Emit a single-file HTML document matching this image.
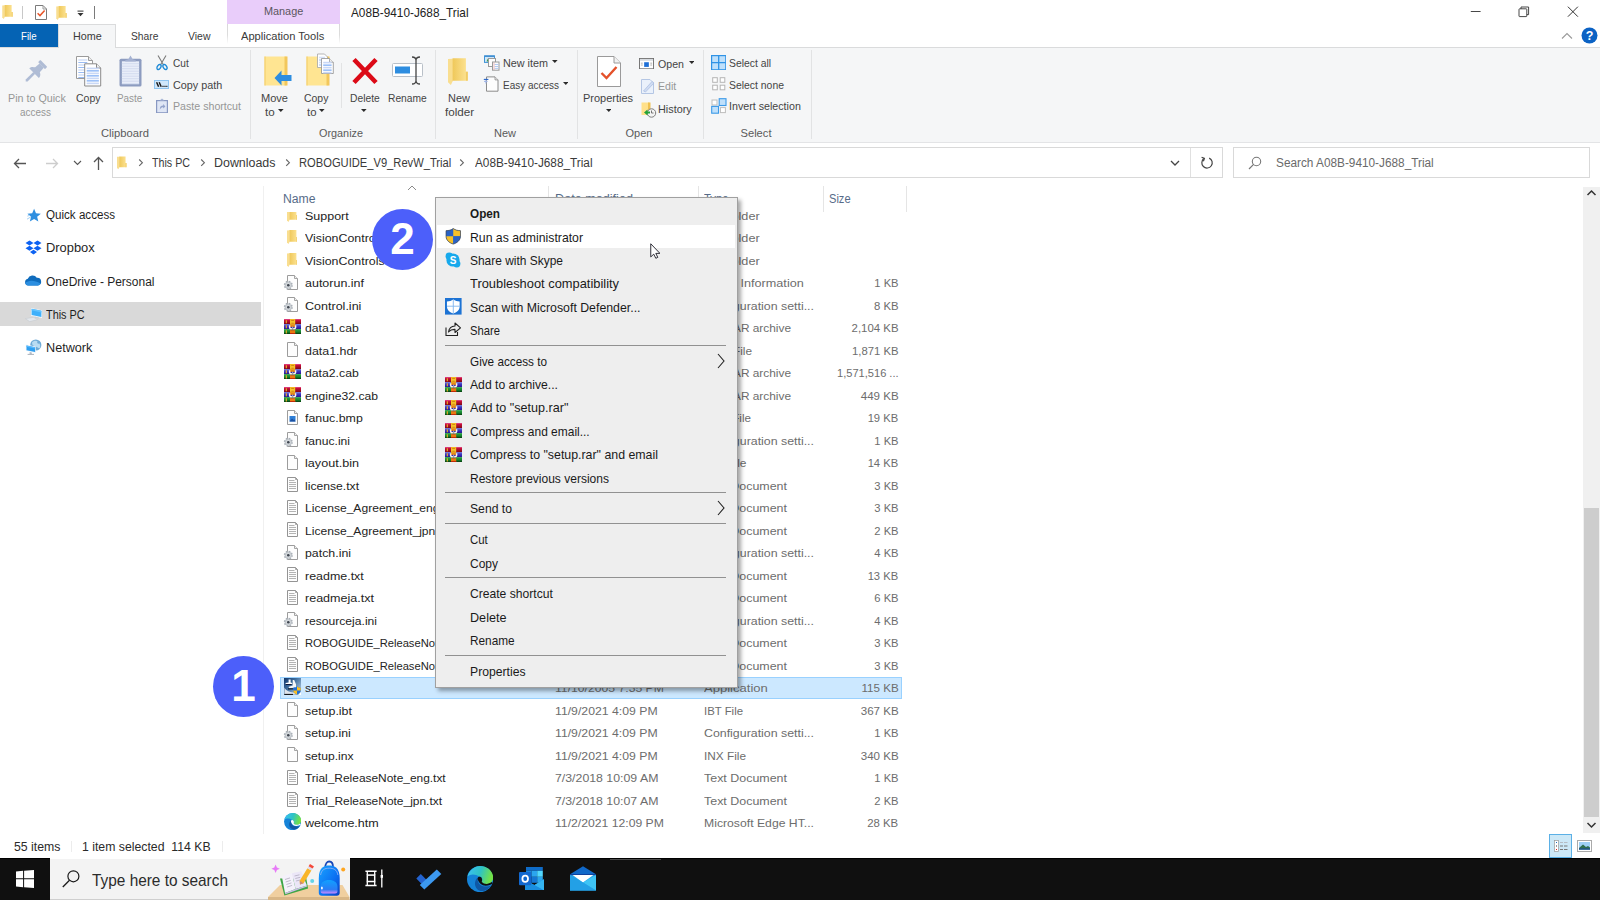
<!DOCTYPE html>
<html lang="en"><head><meta charset="utf-8"><title>A08B-9410-J688_Trial</title>
<style>
html,body{margin:0;padding:0;}
body{width:1600px;height:900px;overflow:hidden;background:#fff;position:relative;font-family:"Liberation Sans", sans-serif;font-size:12px;color:#222;}
.sec{position:absolute;left:0;top:0;width:1600px;height:900px;margin:0;padding:0;display:block;}
.a{position:absolute;display:block;}
.t{position:absolute;white-space:pre;line-height:16px;height:16px;}
</style></head>
<body>
<svg width="0" height="0" style="position:absolute" aria-hidden="true"><defs><linearGradient id="fg" x1="0" y1="0" x2="1" y2="0"><stop offset="0" stop-color="#efc85a"/><stop offset="1" stop-color="#fde496"/></linearGradient><linearGradient id="rr" x1="0" y1="0" x2="0" y2="1"><stop offset="0" stop-color="#e8559a"/><stop offset=".25" stop-color="#c8103c"/><stop offset="1" stop-color="#7c0612"/></linearGradient><linearGradient id="rb" x1="0" y1="0" x2="0" y2="1"><stop offset="0" stop-color="#6f74d6"/><stop offset=".5" stop-color="#3532bd"/><stop offset="1" stop-color="#2a148c"/></linearGradient><linearGradient id="rg" x1="0" y1="0" x2="0" y2="1"><stop offset="0" stop-color="#2aa84a"/><stop offset=".6" stop-color="#15802c"/><stop offset="1" stop-color="#06380c"/></linearGradient><linearGradient id="ry" x1="0" y1="0" x2="0" y2="1"><stop offset="0" stop-color="#f2b51c"/><stop offset=".45" stop-color="#f6c62c"/><stop offset="1" stop-color="#d8660e"/></linearGradient><linearGradient id="su" x1="0" y1="0" x2="1" y2="0.8"><stop offset="0" stop-color="#12366a"/><stop offset=".45" stop-color="#3f6f9f"/><stop offset="1" stop-color="#b4cbe0"/></linearGradient><linearGradient id="eg" x1="0" y1="0" x2="1" y2="0.25"><stop offset="0" stop-color="#3cc0f8"/><stop offset=".55" stop-color="#2fc3c4"/><stop offset="1" stop-color="#72e248"/></linearGradient><linearGradient id="bp" x1="0" y1="0" x2="1" y2="1"><stop offset="0" stop-color="#19a4ff"/><stop offset=".6" stop-color="#0b6ff2"/><stop offset="1" stop-color="#0a3fc4"/></linearGradient><linearGradient id="pk" x1="0" y1="0" x2="0" y2="1"><stop offset="0" stop-color="#11a0ff"/><stop offset=".7" stop-color="#2a7cf5"/><stop offset="1" stop-color="#d08bff"/></linearGradient></defs></svg>
<header class="sec" aria-label="Explorer window chrome">
<svg class="a" style="left:2px;top:5px" width="11" height="14" viewBox="0 0 10.5 14" ><path d="M0 0.4 L2.6 0.2 L2.6 11.8 L1.5 14 L0 12.6 Z" fill="#f9de90"/><path d="M2.4 0 H9.4 V7 H10.4 V11.7 H2.4 Z" fill="url(#fg)"/><path d="M9.4 7 H10.4 V11.7 H9.4 Z" fill="#f1cb66"/></svg>
<div class="a" style="left:22px;top:6px;width:1px;height:13px;background:#c8c8c8"></div>
<svg class="a" style="left:34px;top:5px" width="14" height="15" viewBox="0 0 14 15" ><path d="M1.5 0.5 H9 L12.5 4 V14.5 H1.5 Z" fill="#fff" stroke="#7a7a7a"/><path d="M9 0.5V4H12.5" fill="none" stroke="#9a9a9a"/><path d="M3.6 8.2 L6 10.6 L10.6 5.4" fill="none" stroke="#e8562a" stroke-width="1.5"/></svg>
<svg class="a" style="left:56px;top:6px" width="11" height="14" viewBox="0 0 10.5 14" ><path d="M0 0.4 L2.6 0.2 L2.6 11.8 L1.5 14 L0 12.6 Z" fill="#f9de90"/><path d="M2.4 0 H9.4 V7 H10.4 V11.7 H2.4 Z" fill="url(#fg)"/><path d="M9.4 7 H10.4 V11.7 H9.4 Z" fill="#f1cb66"/></svg>
<svg class="a" style="left:77px;top:10px" width="7" height="7" viewBox="0 0 7 7" ><rect x="0.5" y="0.6" width="6" height="1" fill="#333"/><path d="M0.5 3 H6.5 L3.5 6.2Z" fill="#333"/></svg>
<div class="a" style="left:94px;top:6px;width:1px;height:13px;background:#7a7a7a"></div>
<div class="a" style="left:227px;top:0px;width:113px;height:24px;background:#e9cdfa"></div>
<span class="t" style="top:3.15px;font-size:11.2px;color:#5a5560;left:263.75px;transform:scaleX(0.9706);transform-origin:left center;">Manage</span>
<span class="t" style="top:5.00px;font-size:13px;color:#222;left:351.25px;transform:scaleX(0.9067);transform-origin:left center;">A08B-9410-J688_Trial</span>
<svg class="a" style="left:1470px;top:6px" width="12" height="12" viewBox="0 0 12 12" ><path d="M0.8 5.5H10.6" stroke="#333" stroke-width="0.9"/></svg>
<svg class="a" style="left:1518px;top:6px" width="12" height="12" viewBox="0 0 12 12" ><rect x="1" y="2.8" width="7.8" height="7.8" rx=".6" fill="#fff" stroke="#333" stroke-width=".9"/><path d="M3 2.8V1H10.6V8.6H8.8" fill="none" stroke="#333" stroke-width=".9"/></svg>
<svg class="a" style="left:1567px;top:6px" width="12" height="12" viewBox="0 0 12 12" ><path d="M0.9 0.7L10.9 10.7M10.9 0.7L0.9 10.7" stroke="#2a2a2a" stroke-width="0.95"/></svg>
<div class="a" style="left:0px;top:24px;width:58px;height:23px;background:#0563b4"></div>
<span class="t" style="top:27.90px;font-size:11.2px;color:#fff;left:20.90px;transform:scaleX(0.8652);transform-origin:left center;">File</span>
<div class="a" style="left:0px;top:47px;width:1600px;height:96px;background:#f5f6f7;border-top:1px solid #dadbdc;border-bottom:1px solid #e3e4e6;box-sizing:border-box"></div>
<div class="a" style="left:58px;top:24px;width:58px;height:24px;background:#f5f6f7;border:1px solid #dadbdc;border-bottom:none;box-sizing:border-box"></div>
<span class="t" style="top:27.90px;font-size:11.2px;color:#3a3a3a;left:72.50px;transform:scaleX(0.9634);transform-origin:left center;">Home</span>
<span class="t" style="top:27.90px;font-size:11.2px;color:#3a3a3a;left:130.60px;transform:scaleX(0.9176);transform-origin:left center;">Share</span>
<span class="t" style="top:27.90px;font-size:11.2px;color:#3a3a3a;left:187.50px;transform:scaleX(0.9357);transform-origin:left center;">View</span>
<div class="a" style="left:227px;top:24px;width:1px;height:20px;background:linear-gradient(#d9d9d9,#dcdcdc 55%,#fff)"></div>
<div class="a" style="left:339px;top:24px;width:1px;height:20px;background:linear-gradient(#d9d9d9,#dcdcdc 55%,#fff)"></div>
<span class="t" style="top:27.90px;font-size:11.2px;color:#3a3a3a;left:240.75px;transform:scaleX(0.9938);transform-origin:left center;">Application Tools</span>
<svg class="a" style="left:1561px;top:32px" width="12" height="8" viewBox="0 0 12 8" ><path d="M1 6.5L6 1.5L11 6.5" fill="none" stroke="#9a9a9a" stroke-width="1.1"/></svg>
<svg class="a" style="left:1580.5px;top:27.3px" width="17" height="17" viewBox="0 0 17 17" ><circle cx="8.5" cy="8.5" r="8" fill="#0b62c4"/><text x="8.5" y="13" text-anchor="middle" font-family="Liberation Sans, sans-serif" font-weight="700" font-size="12.5" fill="#fff">?</text></svg>
<svg class="a" style="left:13px;top:157px" width="14" height="13" viewBox="0 0 14 13" ><path d="M13 6.5H1.5M6 2L1.5 6.5L6 11" fill="none" stroke="#555" stroke-width="1.3"/></svg>
<svg class="a" style="left:45px;top:157px" width="14" height="13" viewBox="0 0 14 13" ><path d="M1 6.5H12.5M8 2L12.5 6.5L8 11" fill="none" stroke="#cdcdcd" stroke-width="1.3"/></svg>
<svg class="a" style="left:73px;top:160px" width="9" height="6" viewBox="0 0 9 6" ><path d="M1 1L4.5 4.5L8 1" fill="none" stroke="#555" stroke-width="1.1"/></svg>
<svg class="a" style="left:92px;top:156px" width="13" height="15" viewBox="0 0 13 15" ><path d="M6.5 14V1.5M2 6L6.5 1.5L11 6" fill="none" stroke="#555" stroke-width="1.3"/></svg>
<div class="a" style="left:112px;top:147px;width:1111px;height:31px;border:1px solid #d9d9d9;box-sizing:border-box;background:#fff"></div>
<svg class="a" style="left:117px;top:155.8px" width="9.6" height="13.8" viewBox="0 0 10.5 14" ><path d="M0 0.4 L2.6 0.2 L2.6 11.8 L1.5 14 L0 12.6 Z" fill="#f9de90"/><path d="M2.4 0 H9.4 V7 H10.4 V11.7 H2.4 Z" fill="url(#fg)"/><path d="M9.4 7 H10.4 V11.7 H9.4 Z" fill="#f1cb66"/></svg>
<svg class="a" style="left:138px;top:158px" width="6" height="9" viewBox="0 0 6 9" ><path d="M1.2 1.5L4.4 4.7L1.2 7.9" fill="none" stroke="#666" stroke-width="1.1"/></svg>
<svg class="a" style="left:200px;top:158px" width="6" height="9" viewBox="0 0 6 9" ><path d="M1.2 1.5L4.4 4.7L1.2 7.9" fill="none" stroke="#666" stroke-width="1.1"/></svg>
<svg class="a" style="left:285px;top:158px" width="6" height="9" viewBox="0 0 6 9" ><path d="M1.2 1.5L4.4 4.7L1.2 7.9" fill="none" stroke="#666" stroke-width="1.1"/></svg>
<svg class="a" style="left:459px;top:158px" width="6" height="9" viewBox="0 0 6 9" ><path d="M1.2 1.5L4.4 4.7L1.2 7.9" fill="none" stroke="#666" stroke-width="1.1"/></svg>
<span class="t" style="top:155.10px;font-size:12.3px;color:#3a3a3a;left:152.00px;transform:scaleX(0.8689);transform-origin:left center;">This PC</span>
<span class="t" style="top:155.10px;font-size:12.3px;color:#3a3a3a;left:214.00px;transform:scaleX(1.0108);transform-origin:left center;">Downloads</span>
<span class="t" style="top:155.10px;font-size:12.3px;color:#3a3a3a;left:298.75px;transform:scaleX(0.9081);transform-origin:left center;">ROBOGUIDE_V9_RevW_Trial</span>
<span class="t" style="top:155.10px;font-size:12.3px;color:#3a3a3a;left:474.50px;transform:scaleX(0.9585);transform-origin:left center;">A08B-9410-J688_Trial</span>
<svg class="a" style="left:1170px;top:160px" width="10" height="7" viewBox="0 0 10 7" ><path d="M1 1L5 5L9 1" fill="none" stroke="#444" stroke-width="1.3"/></svg>
<div class="a" style="left:1190px;top:148px;width:1px;height:29px;background:#e0e0e0"></div>
<svg class="a" style="left:1200px;top:156px" width="14" height="14" viewBox="0 0 14 14" ><path d="M9.2 2.1 A5.2 5.2 0 1 1 4 2.6" fill="none" stroke="#444" stroke-width="1.2"/><path d="M1.6 1.2 L4.4 2.4 L3.4 5.2" fill="none" stroke="#444" stroke-width="1.2"/></svg>
<div class="a" style="left:1233px;top:147px;width:357px;height:31px;border:1px solid #d9d9d9;box-sizing:border-box;background:#fff"></div>
<svg class="a" style="left:1248px;top:156px" width="14" height="14" viewBox="0 0 14 14" ><circle cx="8.5" cy="5.5" r="4.2" fill="none" stroke="#777" stroke-width="1.1"/><path d="M5.6 8.4L1 13" stroke="#777" stroke-width="1.2"/></svg>
<span class="t" style="top:155.10px;font-size:12.3px;color:#6a6a6a;left:1276.00px;transform:scaleX(0.9602);transform-origin:left center;">Search A08B-9410-J688_Trial</span>
<div class="a" style="left:0px;top:302px;width:261px;height:24.4px;background:#d9d9d9"></div>
<div class="a" style="left:263px;top:186px;width:1px;height:648px;background:#f0f0f0"></div>
<span class="t" style="top:206.90px;font-size:12px;color:#1f1f1f;left:46.00px;transform:scaleX(0.9669);transform-origin:left center;">Quick access</span>
<span class="t" style="top:240.10px;font-size:12px;color:#1f1f1f;left:46.00px;transform:scaleX(1.0736);transform-origin:left center;">Dropbox</span>
<span class="t" style="top:273.60px;font-size:12px;color:#1f1f1f;left:46.00px;transform:scaleX(0.9980);transform-origin:left center;">OneDrive - Personal</span>
<span class="t" style="top:306.90px;font-size:12px;color:#1f1f1f;left:46.00px;transform:scaleX(0.9042);transform-origin:left center;">This PC</span>
<span class="t" style="top:340.10px;font-size:12px;color:#1f1f1f;left:46.00px;transform:scaleX(1.0542);transform-origin:left center;">Network</span>
<svg class="a" style="left:26.6px;top:207.6px" width="14.2" height="14.2" viewBox="0 0 15 15" ><path d="M7.5 0.8L9.5 5.6L14.6 6L10.7 9.3L12 14.3L7.5 11.6L3 14.3L4.3 9.3L0.4 6L5.5 5.6Z" fill="#2f8fe0"/><path d="M0 11.8L4.3 9.3M0.4 8.6L3 7.6" stroke="#9fcdf3" stroke-width="1"/></svg>
<svg class="a" style="left:25px;top:240px" width="17" height="16" viewBox="0 0 17 16" ><path d="M4.5 0.5L8.5 3L4.5 5.5L0.5 3ZM12.5 0.5L16.5 3L12.5 5.5L8.5 3ZM4.5 5.8L8.5 8.3L4.5 10.8L0.5 8.3ZM12.5 5.8L16.5 8.3L12.5 10.8L8.5 8.3ZM8.5 9.8L12 12L8.5 14.5L5 12Z" fill="#0d62f2"/></svg>
<svg class="a" style="left:24px;top:274px" width="18" height="13" viewBox="0 0 18 13" ><path d="M4 11.5 A3.4 3.4 0 0 1 3.8 4.8 A5 5 0 0 1 12.8 3.8 A3.9 3.9 0 0 1 14 11.5Z" fill="#0f6cbd"/><path d="M1.2 9 C4 6 10 5.5 16.5 9.5 A3 3 0 0 1 14 11.5 H4 A3.4 3.4 0 0 1 1.2 9Z" fill="#2b8ee0"/></svg>
<svg class="a" style="left:25px;top:307px" width="18" height="16" viewBox="0 0 18 16" ><path d="M6 1L17 3.3V10.9L6 8.7Z" fill="#f4f8fc"/><path d="M6.6 1.8L16.4 3.8V10.1L6.6 8.1Z" fill="#3fb0fb"/><path d="M6.6 1.8L16.4 3.8V5.4L6.6 3.2Z" fill="#63c3ff"/><path d="M9.5 9.6L13.5 10.5L14.6 11.8L10 11Z" fill="#c9ced4"/><path d="M0.4 11.6L8.6 10.4L12.6 12.6L4.6 14.6Z" fill="#e3e7ec" stroke="#c3c8cf" stroke-width=".5"/></svg>
<svg class="a" style="left:25px;top:339px" width="18" height="17" viewBox="0 0 18 17" ><circle cx="10.8" cy="6" r="5.6" fill="#6fabd6"/><path d="M7 3.4C8.6 1.6 11 1.4 12.6 2.4C11.6 3.8 12.6 5 14.4 4.6C15.4 6 15.6 8 14.6 9.6C13 9 12 7.6 10.4 7.8C9 8 8.6 6.4 7.4 5.8Z" fill="#b9dcf2"/><path d="M0.8 5.6L10.8 7.6V14L0.8 11.8Z" fill="#eef4fa"/><path d="M1.5 6.5L10.1 8.2V13.1L1.5 11.2Z" fill="#2f9ff0"/><path d="M1.5 6.5L10.1 8.2V9.6L1.5 7.8Z" fill="#58bbff"/><path d="M4.6 13L6.8 13.6V15.3H4.6Z" fill="#b4bcc6"/><path d="M2.6 15.4H9" stroke="#aab2bc" stroke-width="1"/></svg>
<span class="t" style="top:839.35px;font-size:12.4px;color:#2a2a2a;left:14.40px;transform:scaleX(0.9909);transform-origin:left center;">55 items</span>
<span class="t" style="top:839.35px;font-size:12.4px;color:#2a2a2a;left:81.80px;transform:scaleX(0.9896);transform-origin:left center;">1 item selected  114 KB</span>
<div class="a" style="left:71px;top:841px;width:1px;height:11px;background:#ececec"></div>
<div class="a" style="left:222px;top:841px;width:1px;height:11px;background:#ececec"></div>
<div class="a" style="left:1549px;top:834px;width:23px;height:24px;background:#cce8f7;border:1px solid #5bb0e6;box-sizing:border-box"></div>
<svg class="a" style="left:1554px;top:840px" width="14" height="12" viewBox="0 0 14 12" ><rect x="0.5" y="0.5" width="4" height="11" fill="#fff" stroke="#999" stroke-width=".7"/><rect x="2" y="2" width="1" height="1" fill="#1e6fc0"/><rect x="2" y="5.5" width="1" height="1" fill="#334"/><rect x="2" y="9" width="1" height="1" fill="#d22"/><path d="M6 2.5H9M10 2.5H13.5" stroke="#b5bcc4" stroke-width="1.2"/><path d="M6 6H9M10 6H13.5M6 9.5H9M10 9.5H13.5" stroke="#777" stroke-width="1.2"/></svg>
<svg class="a" style="left:1577px;top:840px" width="15" height="12" viewBox="0 0 15 12" ><rect x="0.5" y="0.5" width="14" height="11" fill="#fff" stroke="#aaa"/><rect x="2" y="2" width="11" height="7.6" fill="#9fd0f5"/><path d="M2 8L6 4.5L9 7L11 6L13 7.5V9.6H2Z" fill="#2e6e4e"/><rect x="2" y="8.4" width="11" height="1.2" fill="#1d4f9a"/></svg>
<div class="a" style="left:1583px;top:187px;width:17px;height:646px;background:#f0f0f0"></div>
<div class="a" style="left:1584px;top:508px;width:15px;height:309px;background:#cdcdcd"></div>
<svg class="a" style="left:1586px;top:189px" width="11" height="8" viewBox="0 0 11 8" ><path d="M1.5 6L5.5 2L9.5 6" fill="none" stroke="#333" stroke-width="1.5"/></svg>
<svg class="a" style="left:1586px;top:821px" width="11" height="8" viewBox="0 0 11 8" ><path d="M1.5 2L5.5 6L9.5 2" fill="none" stroke="#333" stroke-width="1.5"/></svg>
</header>
<nav class="sec" aria-label="Ribbon">
<svg class="a" style="left:20px;top:55px" width="32" height="32" viewBox="0 0 32 32" ><g transform="translate(23.8 8.4) rotate(45)" fill="#afbcd5"><rect x="-4.9" y="0" width="9.8" height="3.2" rx="0.6"/><path d="M-3 3H3L3.5 9.5H-3.5Z"/><path d="M-6.8 13.8C-6.8 10.8 -4.6 9.6 -3.4 9H3.4C4.6 9.6 6.8 10.8 6.8 13.8Z"/><path d="M-1.3 13.5H1.3V24.2L0 25.6L-1.3 24.2Z"/></g></svg>
<span class="t" style="top:89.95px;font-size:11.2px;color:#969696;left:7.50px;transform:scaleX(0.9581);transform-origin:left center;">Pin to Quick</span>
<span class="t" style="top:103.65px;font-size:11.2px;color:#969696;left:20.30px;transform:scaleX(0.8886);transform-origin:left center;">access</span>
<svg class="a" style="left:75.5px;top:55.5px" width="26" height="31" viewBox="0 0 26 31" ><path d="M0.5 0.5H12.5L16.5 4.5V22.5H0.5Z" fill="#fff" stroke="#9b9b9b"/><path d="M12.5 0.5V4.5H16.5" fill="#eee" stroke="#9b9b9b"/><rect x="2.3" y="3.2" width="9" height="1.6" fill="#d5e1f8"/><rect x="2.3" y="6.05" width="9" height="0.9" fill="#8fb5f2"/><rect x="2.3" y="8.2" width="9" height="1.6" fill="#d5e1f8"/><rect x="2.3" y="11.05" width="9" height="0.9" fill="#8fb5f2"/><rect x="2.3" y="13.2" width="9" height="1.6" fill="#d5e1f8"/><rect x="2.3" y="16.05" width="9" height="0.9" fill="#8fb5f2"/><rect x="2.3" y="18.2" width="9" height="1.6" fill="#d5e1f8"/><rect x="2.3" y="21.05" width="9" height="0.9" fill="#8fb5f2"/><path d="M8.7 7.8H20.5L24.7 12V30H8.7Z" fill="#fff" stroke="#8a8a8a"/><path d="M20.5 7.8V12H24.7" fill="#eee" stroke="#8a8a8a"/><rect x="10.7" y="11.6" width="12.2" height="1.6" fill="#c9d8f6"/><rect x="10.7" y="14.450000000000001" width="12.2" height="0.9" fill="#4f8ff0"/><rect x="10.7" y="16.599999999999998" width="12.2" height="1.6" fill="#c9d8f6"/><rect x="10.7" y="19.45" width="12.2" height="0.9" fill="#4f8ff0"/><rect x="10.7" y="21.599999999999998" width="12.2" height="1.6" fill="#c9d8f6"/><rect x="10.7" y="24.45" width="12.2" height="0.9" fill="#4f8ff0"/><rect x="10.7" y="26.599999999999998" width="12.2" height="1.6" fill="#c9d8f6"/></svg>
<span class="t" style="top:89.95px;font-size:11.2px;color:#444444;left:75.50px;transform:scaleX(0.9378);transform-origin:left center;">Copy</span>
<svg class="a" style="left:118.5px;top:54.5px" width="23" height="32" viewBox="0 0 23 32" ><rect x="0.5" y="3.7" width="22" height="27.8" rx="1.6" fill="#8d9cc0"/><rect x="2.9" y="6.3" width="17.2" height="22.8" fill="#e9eef9"/><rect x="2.9" y="8.2" width="17.2" height="1" fill="#d3dbef"/><rect x="2.9" y="10.7" width="17.2" height="1" fill="#d3dbef"/><rect x="2.9" y="13.2" width="17.2" height="1" fill="#d3dbef"/><rect x="2.9" y="15.7" width="17.2" height="1" fill="#d3dbef"/><rect x="2.9" y="18.2" width="17.2" height="1" fill="#d3dbef"/><rect x="2.9" y="20.7" width="17.2" height="1" fill="#d3dbef"/><rect x="2.9" y="23.2" width="17.2" height="1" fill="#d3dbef"/><rect x="2.9" y="25.7" width="17.2" height="1" fill="#d3dbef"/><rect x="2.9" y="28.2" width="17.2" height="1" fill="#d3dbef"/><path d="M6.2 6.6V5.2L9.3 4.2L11.5 0.6L13.7 4.2L16.8 5.2V6.6Z" fill="#a5b2d2"/></svg>
<span class="t" style="top:89.95px;font-size:11.2px;color:#969696;left:116.90px;transform:scaleX(0.8843);transform-origin:left center;">Paste</span>
<svg class="a" style="left:156px;top:55px" width="12" height="16" viewBox="0 0 12 16" ><path d="M2 0.5L7.6 10M10 0.5L4.4 10" stroke="#7b7b7b" stroke-width="1.1" fill="none"/><ellipse cx="3" cy="12" rx="1.7" ry="2.7" transform="rotate(32 3 12)" fill="none" stroke="#1e8ad6" stroke-width="1.4"/><ellipse cx="9" cy="12" rx="1.7" ry="2.7" transform="rotate(-32 9 12)" fill="none" stroke="#1e8ad6" stroke-width="1.4"/></svg>
<span class="t" style="top:55.45px;font-size:11.2px;color:#444444;left:172.60px;transform:scaleX(0.9012);transform-origin:left center;">Cut</span>
<svg class="a" style="left:154px;top:80px" width="15" height="9" viewBox="0 0 15 9" ><rect x="0.5" y="0.5" width="14" height="8" fill="#cfe7fb" stroke="#8fc4ef"/><path d="M2.6 2.2L4.6 6.8M5.2 2.2L7.2 6.8" stroke="#1a1a1a" stroke-width="1.5"/><path d="M8.4 6.3H9.6M10.4 6.3H11.6M12.3 6.3H13.4" stroke="#1a1a1a" stroke-width="1.3"/></svg>
<span class="t" style="top:76.95px;font-size:11.2px;color:#444444;left:172.60px;transform:scaleX(0.9667);transform-origin:left center;">Copy path</span>
<svg class="a" style="left:155.6px;top:97.6px" width="12" height="15.4" viewBox="0 0 12 15.4" ><rect x="0.6" y="2.6" width="10.8" height="12.2" fill="#dfe6f5" stroke="#8898c2" stroke-width="1.2"/><path d="M3.6 2.6L6 0.4L8.4 2.6Z" fill="#a9b6d6"/><path d="M3.8 11.6C3.8 8.6 5.2 7.6 7.2 7.6V6L9.4 8.4L7.2 10.6V9.2C5.8 9.2 5 9.8 3.8 11.6Z" fill="#93a3cb"/></svg>
<span class="t" style="top:98.25px;font-size:11.2px;color:#969696;left:172.60px;transform:scaleX(0.9508);transform-origin:left center;">Paste shortcut</span>
<span class="t" style="top:124.65px;font-size:11.2px;color:#5a5a5a;left:-25.00px;width:300px;text-align:center;transform:scaleX(1.0023);transform-origin:center center;">Clipboard</span>
<div class="a" style="left:250px;top:50px;width:1px;height:89px;background:#e2e3e4"></div>
<svg class="a" style="left:263.5px;top:56px" width="28" height="30" viewBox="0 0 28 30" ><path d="M0.5 0.5H22.5V29.5H0.5Z" fill="#ffe592"/><path d="M20.5 0.5H23.5V29.5H20.5Z" fill="#f2c75c"/><path d="M0.5 0.5H1.5V29.5H0.5Z" fill="#f1cc66"/><path d="M10.5 22L17.5 14.5V19H27.5V25H17.5V29.5Z" fill="#2d8de0"/></svg>
<span class="t" style="top:89.95px;font-size:11.2px;color:#444444;left:261.00px;transform:scaleX(0.9869);transform-origin:left center;">Move</span>
<span class="t" style="top:103.65px;font-size:11.2px;color:#444444;left:264.80px;transform:scaleX(1.0381);transform-origin:left center;">to</span>
<svg class="a" style="left:278.2px;top:108.9px" width="5.6" height="3" viewBox="0 0 5.6 3" ><path d="M0 0H5.6L2.8 2.9Z" fill="#2b2b2b"/></svg>
<svg class="a" style="left:306px;top:53px" width="28" height="33" viewBox="0 0 28 33" ><g transform="translate(0 3)"><path d="M0.5 0.5H22.5V29.5H0.5Z" fill="#ffe592"/><path d="M20.5 0.5H23.5V29.5H20.5Z" fill="#f2c75c"/><path d="M0.5 0.5H1.5V29.5H0.5Z" fill="#f1cc66"/></g><path d="M11.5 1H18.5L21.5 4V14.5H11.5Z" fill="#fff" stroke="#a5a5a5" stroke-width=".8"/><rect x="13" y="3.7" width="6" height="1.6" fill="#d5e1f8"/><rect x="13" y="6.55" width="6" height="0.9" fill="#8fb5f2"/><rect x="13" y="8.7" width="6" height="1.6" fill="#d5e1f8"/><rect x="13" y="11.55" width="6" height="0.9" fill="#8fb5f2"/><path d="M15.5 5.5H23.5L27.3 9.3V20.5H15.5Z" fill="#fff" stroke="#8f8f8f" stroke-width=".8"/><path d="M23.5 5.5V9.3H27.3" fill="#eee" stroke="#8f8f8f" stroke-width=".7"/><rect x="17.2" y="8.799999999999999" width="8.4" height="1.6" fill="#c9d8f6"/><rect x="17.2" y="11.65" width="8.4" height="0.9" fill="#4f8ff0"/><rect x="17.2" y="13.799999999999999" width="8.4" height="1.6" fill="#c9d8f6"/><rect x="17.2" y="16.650000000000002" width="8.4" height="0.9" fill="#4f8ff0"/><rect x="17.2" y="18.8" width="8.4" height="1.6" fill="#c9d8f6"/></svg>
<span class="t" style="top:89.95px;font-size:11.2px;color:#444444;left:303.60px;transform:scaleX(0.9340);transform-origin:left center;">Copy</span>
<span class="t" style="top:103.65px;font-size:11.2px;color:#444444;left:306.50px;transform:scaleX(1.0167);transform-origin:left center;">to</span>
<svg class="a" style="left:319.2px;top:108.9px" width="5.6" height="3" viewBox="0 0 5.6 3" ><path d="M0 0H5.6L2.8 2.9Z" fill="#2b2b2b"/></svg>
<div class="a" style="left:341px;top:63px;width:1px;height:45px;background:#e2e3e4"></div>
<svg class="a" style="left:351px;top:57px" width="28" height="28" viewBox="0 0 28 28" ><path d="M3 2.5L25 25.5M25 2.5L3 25.5" stroke="#dc0a17" stroke-width="4.6" fill="none"/></svg>
<span class="t" style="top:89.95px;font-size:11.2px;color:#444444;left:349.70px;transform:scaleX(0.9183);transform-origin:left center;">Delete</span>
<svg class="a" style="left:361.4px;top:108.9px" width="5.6" height="3" viewBox="0 0 5.6 3" ><path d="M0 0H5.6L2.8 2.9Z" fill="#2b2b2b"/></svg>
<svg class="a" style="left:392px;top:56px" width="32" height="29" viewBox="0 0 32 29" ><rect x="0.5" y="7.5" width="30" height="13" rx="1" fill="#fff" stroke="#b9c0c8"/><rect x="3" y="10.5" width="15" height="7" fill="#2d8de0"/><path d="M20 1C23 1 24 2.5 24 4.5V24.5C24 26.5 23 28 20 28M28 1C25 1 24 2.5 24 4.5M24 24.5C24 26.5 25 28 28 28" fill="none" stroke="#444" stroke-width="1.3"/></svg>
<span class="t" style="top:89.95px;font-size:11.2px;color:#444444;left:387.50px;transform:scaleX(0.9161);transform-origin:left center;">Rename</span>
<span class="t" style="top:124.65px;font-size:11.2px;color:#5a5a5a;left:191.00px;width:300px;text-align:center;transform:scaleX(0.9690);transform-origin:center center;">Organize</span>
<div class="a" style="left:435px;top:50px;width:1px;height:89px;background:#e2e3e4"></div>
<svg class="a" style="left:448.4px;top:57px" width="20" height="29.4" viewBox="0 0 10.5 14" ><path d="M0 0.4 L2.6 0.2 L2.6 11.8 L1.5 14 L0 12.6 Z" fill="#f9de90"/><path d="M2.4 0 H9.4 V7 H10.4 V11.7 H2.4 Z" fill="url(#fg)"/><path d="M9.4 7 H10.4 V11.7 H9.4 Z" fill="#f1cb66"/></svg>
<span class="t" style="top:89.95px;font-size:11.2px;color:#444444;left:448.40px;transform:scaleX(0.9781);transform-origin:left center;">New</span>
<span class="t" style="top:103.65px;font-size:11.2px;color:#444444;left:445.00px;transform:scaleX(1.0429);transform-origin:left center;">folder</span>
<svg class="a" style="left:484px;top:54.6px" width="16" height="16" viewBox="0 0 16 16" ><rect x="0.5" y="0.8" width="10" height="6.6" fill="#cfe6f8" stroke="#3f93d6"/><path d="M1 1.3H10" stroke="#2b7fc8" stroke-width="1"/><path d="M2.6 6.5L3.6 3.4L4.6 6.5Z" fill="#3a9a4a"/><rect x="4.5" y="3.5" width="7" height="8" fill="#fdfdfd" stroke="#9a9a9a"/><rect x="8.5" y="7" width="6.5" height="8.2" fill="#fdfdfd" stroke="#9a9a9a"/><path d="M10.6 9.5H14.4M10.6 11.5H14.4M10.6 13.4H14.4" stroke="#a9c4f2" stroke-width=".9"/><path d="M10 7.4V15" stroke="#e9a0a0" stroke-width=".7"/></svg>
<span class="t" style="top:55.05px;font-size:11.2px;color:#444444;left:503.00px;transform:scaleX(0.9651);transform-origin:left center;">New item</span>
<svg class="a" style="left:552.2px;top:59.9px" width="5.6" height="3" viewBox="0 0 5.6 3" ><path d="M0 0H5.6L2.8 2.9Z" fill="#2b2b2b"/></svg>
<svg class="a" style="left:483px;top:76.4px" width="16" height="16" viewBox="0 0 16 16" ><path d="M3.5 0.9H12L15 3.9V15.2H3.5Z" fill="#fdfdfd" stroke="#8c8c8c"/><path d="M12 0.9V3.9H15" fill="#eee" stroke="#8c8c8c" stroke-width=".8"/><path d="M0.8 3.4H5.4" stroke="#2464c8" stroke-width="1.1"/><path d="M1 5.4H4.6M2.9 4V7.6" stroke="#9fb4e6" stroke-width="1"/></svg>
<span class="t" style="top:76.75px;font-size:11.2px;color:#444444;left:503.00px;transform:scaleX(0.8915);transform-origin:left center;">Easy access</span>
<svg class="a" style="left:562.8000000000001px;top:81.9px" width="5.6" height="3" viewBox="0 0 5.6 3" ><path d="M0 0H5.6L2.8 2.9Z" fill="#2b2b2b"/></svg>
<span class="t" style="top:124.65px;font-size:11.2px;color:#5a5a5a;left:355.00px;width:300px;text-align:center;transform:scaleX(0.9826);transform-origin:center center;">New</span>
<div class="a" style="left:577px;top:50px;width:1px;height:89px;background:#e2e3e4"></div>
<svg class="a" style="left:596.5px;top:55.5px" width="24" height="31" viewBox="0 0 24 31" ><path d="M0.5 0.5H17L23.5 7V30.5H0.5Z" fill="#fff" stroke="#9a9a9a"/><path d="M17 0.5V7H23.5" fill="#f1f1f1" stroke="#9a9a9a"/><path d="M4.5 17L9.5 22L19.5 11" fill="none" stroke="#e4512a" stroke-width="2.4"/></svg>
<span class="t" style="top:89.95px;font-size:11.2px;color:#444444;left:583.30px;transform:scaleX(0.9804);transform-origin:left center;">Properties</span>
<svg class="a" style="left:605.5px;top:108.9px" width="5.6" height="3" viewBox="0 0 5.6 3" ><path d="M0 0H5.6L2.8 2.9Z" fill="#2b2b2b"/></svg>
<svg class="a" style="left:639px;top:57.6px" width="15" height="11.25" viewBox="0 0 16 12" ><rect x="0.5" y="0.5" width="15" height="11" fill="#fff" stroke="#6f6f6f"/><rect x="1" y="1" width="14" height="2" fill="#d7dbe0"/><rect x="5.5" y="4.5" width="5" height="5" fill="#1f6fd6"/><path d="M2 5.5H4M2 7.5H4M12 5.5H14M12 7.5H14" stroke="#999" stroke-width=".8"/></svg>
<span class="t" style="top:55.85px;font-size:11.2px;color:#444444;left:657.80px;transform:scaleX(0.9479);transform-origin:left center;">Open</span>
<svg class="a" style="left:688.7px;top:60.9px" width="5.6" height="3" viewBox="0 0 5.6 3" ><path d="M0 0H5.6L2.8 2.9Z" fill="#2b2b2b"/></svg>
<svg class="a" style="left:641px;top:78px" width="14" height="16" viewBox="0 0 14 16" ><path d="M0.5 1.5H9L12.5 5V15.5H0.5Z" fill="#eaf1fb" stroke="#b4c6e4"/><path d="M2.5 13L11 3.5L13 5L4.5 14Z" fill="#cfdcf3" stroke="#a9bce0" stroke-width=".7"/></svg>
<span class="t" style="top:78.25px;font-size:11.2px;color:#969696;left:657.80px;transform:scaleX(0.9439);transform-origin:left center;">Edit</span>
<svg class="a" style="left:640.5px;top:102px" width="16" height="16" viewBox="0 0 16 16" ><path d="M0.5 0.5H8.5V13H0.5Z" fill="#ffe08a"/><path d="M7 0.5H9.5V13H7Z" fill="#efc050"/><circle cx="10.5" cy="11" r="4.2" fill="#f4f4f4" stroke="#7d7d7d"/><path d="M10.5 8.5V11H12.5" fill="none" stroke="#666" stroke-width=".9"/><path d="M3 10.5L6.5 7.5V9.5H9V11.5H6.5V13.5Z" fill="#23a33a"/></svg>
<span class="t" style="top:100.85px;font-size:11.2px;color:#444444;left:657.80px;transform:scaleX(0.9680);transform-origin:left center;">History</span>
<span class="t" style="top:124.65px;font-size:11.2px;color:#5a5a5a;left:489.00px;width:300px;text-align:center;transform:scaleX(0.9863);transform-origin:center center;">Open</span>
<div class="a" style="left:703px;top:50px;width:1px;height:89px;background:#e2e3e4"></div>
<svg class="a" style="left:711px;top:55px" width="15.4" height="15.4" viewBox="0 0 15.4 15.4" ><rect x="0.6" y="0.6" width="14.2" height="14.2" fill="#bfe0fb" stroke="#2f93e6" stroke-width="1.2"/><path d="M7.7 0.6V14.8M0.6 7.7H14.8" stroke="#2f93e6" stroke-width="1.3"/></svg>
<span class="t" style="top:55.05px;font-size:11.2px;color:#444444;left:729.40px;transform:scaleX(0.9272);transform-origin:left center;">Select all</span>
<svg class="a" style="left:711.5px;top:77px" width="15" height="15" viewBox="0 0 15 15" ><rect x="0.7" y="0.7" width="4.6" height="4.6" fill="#fff" stroke="#b5b5b5" stroke-width="1"/><rect x="0.7" y="8.2" width="4.6" height="4.6" fill="#fff" stroke="#b5b5b5" stroke-width="1"/><rect x="8.2" y="0.7" width="4.6" height="4.6" fill="#fff" stroke="#b5b5b5" stroke-width="1"/><rect x="8.2" y="8.2" width="4.6" height="4.6" fill="#fff" stroke="#b5b5b5" stroke-width="1"/></svg>
<span class="t" style="top:76.95px;font-size:11.2px;color:#444444;left:729.40px;transform:scaleX(0.9307);transform-origin:left center;">Select none</span>
<svg class="a" style="left:711px;top:98px" width="16" height="16" viewBox="0 0 16 16" ><rect x="1" y="2" width="5" height="5" fill="#fff" stroke="#bdbdbd"/><rect x="8.2" y="0.7" width="6.8" height="6.8" fill="#bfe0fb" stroke="#3c9ae8" stroke-width="1.1"/><rect x="0.7" y="8.4" width="6.8" height="6.8" fill="#bfe0fb" stroke="#3c9ae8" stroke-width="1.1"/><rect x="9.4" y="9.6" width="5" height="5" fill="#fff" stroke="#bdbdbd"/></svg>
<span class="t" style="top:98.25px;font-size:11.2px;color:#444444;left:729.40px;transform:scaleX(0.9548);transform-origin:left center;">Invert selection</span>
<span class="t" style="top:124.65px;font-size:11.2px;color:#5a5a5a;left:605.70px;width:300px;text-align:center;transform:scaleX(0.9970);transform-origin:center center;">Select</span>
<div class="a" style="left:811px;top:50px;width:1px;height:89px;background:#e2e3e4"></div>
</nav>
<main class="sec" aria-label="File list">
<div class="a" style="left:280px;top:676.5px;width:622px;height:22.5px;background:#cce8ff;border:1px solid #99d1ff;box-sizing:border-box"></div>
<svg class="a" style="left:286.6px;top:207.5px" width="10.5" height="14" viewBox="0 0 10.5 14" ><path d="M0 0.4 L2.6 0.2 L2.6 11.8 L1.5 14 L0 12.6 Z" fill="#f9de90"/><path d="M2.4 0 H9.4 V7 H10.4 V11.7 H2.4 Z" fill="url(#fg)"/><path d="M9.4 7 H10.4 V11.7 H9.4 Z" fill="#f1cb66"/></svg>
<span class="t" style="top:207.70px;font-size:11.8px;color:#242424;left:305.00px;transform:scaleX(1.0586);transform-origin:left center;">Support</span>
<span class="t" style="top:207.70px;font-size:11.8px;color:#6d6d6d;left:554.60px;transform:scaleX(1.0382);transform-origin:left center;">11/9/2021 4:10 PM</span>
<span class="t" style="top:207.70px;font-size:11.8px;color:#6d6d6d;left:704.00px;transform:scaleX(1.0754);transform-origin:left center;">File folder</span>
<svg class="a" style="left:286.6px;top:230.0px" width="10.5" height="14" viewBox="0 0 10.5 14" ><path d="M0 0.4 L2.6 0.2 L2.6 11.8 L1.5 14 L0 12.6 Z" fill="#f9de90"/><path d="M2.4 0 H9.4 V7 H10.4 V11.7 H2.4 Z" fill="url(#fg)"/><path d="M9.4 7 H10.4 V11.7 H9.4 Z" fill="#f1cb66"/></svg>
<span class="t" style="top:230.20px;font-size:11.8px;color:#242424;left:305.00px;transform:scaleX(1.0499);transform-origin:left center;">VisionControl</span>
<span class="t" style="top:230.20px;font-size:11.8px;color:#6d6d6d;left:554.60px;transform:scaleX(1.0382);transform-origin:left center;">11/9/2021 4:10 PM</span>
<span class="t" style="top:230.20px;font-size:11.8px;color:#6d6d6d;left:704.00px;transform:scaleX(1.0754);transform-origin:left center;">File folder</span>
<svg class="a" style="left:286.6px;top:252.5px" width="10.5" height="14" viewBox="0 0 10.5 14" ><path d="M0 0.4 L2.6 0.2 L2.6 11.8 L1.5 14 L0 12.6 Z" fill="#f9de90"/><path d="M2.4 0 H9.4 V7 H10.4 V11.7 H2.4 Z" fill="url(#fg)"/><path d="M9.4 7 H10.4 V11.7 H9.4 Z" fill="#f1cb66"/></svg>
<span class="t" style="top:252.70px;font-size:11.8px;color:#242424;left:305.00px;transform:scaleX(1.0499);transform-origin:left center;">VisionControls</span>
<span class="t" style="top:252.70px;font-size:11.8px;color:#6d6d6d;left:554.60px;transform:scaleX(1.0382);transform-origin:left center;">11/9/2021 4:10 PM</span>
<span class="t" style="top:252.70px;font-size:11.8px;color:#6d6d6d;left:704.00px;transform:scaleX(1.0754);transform-origin:left center;">File folder</span>
<svg class="a" style="left:282.8px;top:274.7px" width="16" height="16" viewBox="0 0 16 16" ><path d="M4.5 0.5 H11.5 L14.5 3.5 V14.5 H4.5 Z" fill="#fdfdfd" stroke="#9c9c9c" stroke-width="1"/><path d="M11.5 0.5 V3.5 H14.5" fill="#f0f0f0" stroke="#9c9c9c" stroke-width="0.9"/><circle cx="5.3" cy="10.2" r="3.6" fill="#cfd3d8" stroke="#a9afb7" stroke-width="1.8" stroke-dasharray="1.5 1.33"/><circle cx="5.3" cy="10.2" r="3" fill="#d3d7db" stroke="#b4bac1" stroke-width=".5"/><circle cx="5.3" cy="10.2" r="1.3" fill="#3f4650"/></svg>
<span class="t" style="top:275.20px;font-size:11.8px;color:#242424;left:305.00px;transform:scaleX(1.0583);transform-origin:left center;">autorun.inf</span>
<span class="t" style="top:275.20px;font-size:11.8px;color:#6d6d6d;left:554.60px;transform:scaleX(1.0382);transform-origin:left center;">11/9/2021 4:09 PM</span>
<span class="t" style="top:275.20px;font-size:11.8px;color:#6d6d6d;left:704.00px;transform:scaleX(1.0711);transform-origin:left center;">Setup Information</span>
<span class="t" style="top:275.20px;font-size:11.8px;color:#6d6d6d;right:701.50px;transform:scaleX(0.9481);transform-origin:right center;">1 KB</span>
<svg class="a" style="left:282.8px;top:297.2px" width="16" height="16" viewBox="0 0 16 16" ><path d="M4.5 0.5 H11.5 L14.5 3.5 V14.5 H4.5 Z" fill="#fdfdfd" stroke="#9c9c9c" stroke-width="1"/><path d="M11.5 0.5 V3.5 H14.5" fill="#f0f0f0" stroke="#9c9c9c" stroke-width="0.9"/><circle cx="5.3" cy="10.2" r="3.6" fill="#cfd3d8" stroke="#a9afb7" stroke-width="1.8" stroke-dasharray="1.5 1.33"/><circle cx="5.3" cy="10.2" r="3" fill="#d3d7db" stroke="#b4bac1" stroke-width=".5"/><circle cx="5.3" cy="10.2" r="1.3" fill="#3f4650"/></svg>
<span class="t" style="top:297.70px;font-size:11.8px;color:#242424;left:305.00px;transform:scaleX(1.0620);transform-origin:left center;">Control.ini</span>
<span class="t" style="top:297.70px;font-size:11.8px;color:#6d6d6d;left:554.60px;transform:scaleX(1.0382);transform-origin:left center;">11/9/2021 4:09 PM</span>
<span class="t" style="top:297.70px;font-size:11.8px;color:#6d6d6d;left:704.00px;transform:scaleX(1.0484);transform-origin:left center;">Configuration setti...</span>
<span class="t" style="top:297.70px;font-size:11.8px;color:#6d6d6d;right:701.50px;transform:scaleX(0.9618);transform-origin:right center;">8 KB</span>
<svg class="a" style="left:284px;top:319.0px" width="17.0" height="15.0" viewBox="0 0 17 15" ><rect x="0" y="0" width="17" height="5.1" fill="url(#rr)"/><rect x="0" y="5.1" width="17" height="5" fill="url(#rb)"/><rect x="0" y="10.1" width="17" height="4.9" fill="url(#rg)"/><path d="M2.3 1.2V4.2M2.3 6.2V9.2M2.3 11.2V14.6" stroke="#f2b223" stroke-width="1.1"/><rect x="6" y="0" width="5.2" height="8" fill="url(#ry)"/><path d="M7.2 1.5H10M7.4 4.2H9.8" stroke="#c97a10" stroke-width=".8"/><rect x="6" y="10.6" width="5.2" height="4.4" fill="#e8790f"/><rect x="6" y="14" width="5.2" height="1" fill="#c22a0a"/><path d="M5.6 6.3V8.2C5.6 10.6 11.6 10.6 11.6 8.2V6.3" fill="none" stroke="#fbf7f4" stroke-width="1.5"/><path d="M8.6 7.6V10.8" stroke="#9aa7b4" stroke-width="1.2"/><path d="M6.4 10.9H10.8" stroke="#5a4a48" stroke-width=".7"/></svg>
<span class="t" style="top:320.20px;font-size:11.8px;color:#242424;left:305.00px;transform:scaleX(1.0371);transform-origin:left center;">data1.cab</span>
<span class="t" style="top:320.20px;font-size:11.8px;color:#6d6d6d;left:554.60px;transform:scaleX(1.0382);transform-origin:left center;">11/9/2021 4:09 PM</span>
<span class="t" style="top:320.20px;font-size:11.8px;color:#6d6d6d;left:704.00px;transform:scaleX(1.0054);transform-origin:left center;">WinRAR archive</span>
<span class="t" style="top:320.20px;font-size:11.8px;color:#6d6d6d;right:701.50px;transform:scaleX(0.9681);transform-origin:right center;">2,104 KB</span>
<svg class="a" style="left:285.8px;top:342.2px" width="13" height="15" viewBox="0 0 13 15" ><path d="M1.5 0.5 H8.5 L11.5 3.5 V14.5 H1.5 Z" fill="#fdfdfd" stroke="#9c9c9c" stroke-width="1"/><path d="M8.5 0.5 V3.5 H11.5" fill="#f0f0f0" stroke="#9c9c9c" stroke-width="0.9"/></svg>
<span class="t" style="top:342.70px;font-size:11.8px;color:#242424;left:305.00px;transform:scaleX(1.0530);transform-origin:left center;">data1.hdr</span>
<span class="t" style="top:342.70px;font-size:11.8px;color:#6d6d6d;left:554.60px;transform:scaleX(1.0382);transform-origin:left center;">11/9/2021 4:09 PM</span>
<span class="t" style="top:342.70px;font-size:11.8px;color:#6d6d6d;left:704.00px;transform:scaleX(1.0029);transform-origin:left center;">HDR File</span>
<span class="t" style="top:342.70px;font-size:11.8px;color:#6d6d6d;right:701.50px;transform:scaleX(0.9578);transform-origin:right center;">1,871 KB</span>
<svg class="a" style="left:284px;top:364.0px" width="17.0" height="15.0" viewBox="0 0 17 15" ><rect x="0" y="0" width="17" height="5.1" fill="url(#rr)"/><rect x="0" y="5.1" width="17" height="5" fill="url(#rb)"/><rect x="0" y="10.1" width="17" height="4.9" fill="url(#rg)"/><path d="M2.3 1.2V4.2M2.3 6.2V9.2M2.3 11.2V14.6" stroke="#f2b223" stroke-width="1.1"/><rect x="6" y="0" width="5.2" height="8" fill="url(#ry)"/><path d="M7.2 1.5H10M7.4 4.2H9.8" stroke="#c97a10" stroke-width=".8"/><rect x="6" y="10.6" width="5.2" height="4.4" fill="#e8790f"/><rect x="6" y="14" width="5.2" height="1" fill="#c22a0a"/><path d="M5.6 6.3V8.2C5.6 10.6 11.6 10.6 11.6 8.2V6.3" fill="none" stroke="#fbf7f4" stroke-width="1.5"/><path d="M8.6 7.6V10.8" stroke="#9aa7b4" stroke-width="1.2"/><path d="M6.4 10.9H10.8" stroke="#5a4a48" stroke-width=".7"/></svg>
<span class="t" style="top:365.20px;font-size:11.8px;color:#242424;left:305.00px;transform:scaleX(1.0371);transform-origin:left center;">data2.cab</span>
<span class="t" style="top:365.20px;font-size:11.8px;color:#6d6d6d;left:554.60px;transform:scaleX(1.0382);transform-origin:left center;">11/9/2021 4:10 PM</span>
<span class="t" style="top:365.20px;font-size:11.8px;color:#6d6d6d;left:704.00px;transform:scaleX(1.0054);transform-origin:left center;">WinRAR archive</span>
<span class="t" style="top:365.20px;font-size:11.8px;color:#6d6d6d;right:701.50px;transform:scaleX(0.9376);transform-origin:right center;">1,571,516 ...</span>
<svg class="a" style="left:284px;top:386.5px" width="17.0" height="15.0" viewBox="0 0 17 15" ><rect x="0" y="0" width="17" height="5.1" fill="url(#rr)"/><rect x="0" y="5.1" width="17" height="5" fill="url(#rb)"/><rect x="0" y="10.1" width="17" height="4.9" fill="url(#rg)"/><path d="M2.3 1.2V4.2M2.3 6.2V9.2M2.3 11.2V14.6" stroke="#f2b223" stroke-width="1.1"/><rect x="6" y="0" width="5.2" height="8" fill="url(#ry)"/><path d="M7.2 1.5H10M7.4 4.2H9.8" stroke="#c97a10" stroke-width=".8"/><rect x="6" y="10.6" width="5.2" height="4.4" fill="#e8790f"/><rect x="6" y="14" width="5.2" height="1" fill="#c22a0a"/><path d="M5.6 6.3V8.2C5.6 10.6 11.6 10.6 11.6 8.2V6.3" fill="none" stroke="#fbf7f4" stroke-width="1.5"/><path d="M8.6 7.6V10.8" stroke="#9aa7b4" stroke-width="1.2"/><path d="M6.4 10.9H10.8" stroke="#5a4a48" stroke-width=".7"/></svg>
<span class="t" style="top:387.70px;font-size:11.8px;color:#242424;left:305.00px;transform:scaleX(1.0302);transform-origin:left center;">engine32.cab</span>
<span class="t" style="top:387.70px;font-size:11.8px;color:#6d6d6d;left:554.60px;transform:scaleX(1.0382);transform-origin:left center;">11/9/2021 4:09 PM</span>
<span class="t" style="top:387.70px;font-size:11.8px;color:#6d6d6d;left:704.00px;transform:scaleX(1.0054);transform-origin:left center;">WinRAR archive</span>
<span class="t" style="top:387.70px;font-size:11.8px;color:#6d6d6d;right:701.50px;transform:scaleX(0.9818);transform-origin:right center;">449 KB</span>
<svg class="a" style="left:285.8px;top:409.7px" width="13" height="15" viewBox="0 0 13 15" ><path d="M1.5 0.5 H8.5 L11.5 3.5 V14.5 H1.5 Z" fill="#fdfdfd" stroke="#9c9c9c" stroke-width="1"/><path d="M8.5 0.5 V3.5 H11.5" fill="#f0f0f0" stroke="#9c9c9c" stroke-width="0.9"/><rect x="3.5" y="6" width="6" height="5.5" fill="#2f7fd6"/><path d="M3.5 11.5 L6 8.5 L7.6 10 L8.4 9.3 L9.5 11.5Z" fill="#1b4fa0"/></svg>
<span class="t" style="top:410.20px;font-size:11.8px;color:#242424;left:305.00px;transform:scaleX(1.0491);transform-origin:left center;">fanuc.bmp</span>
<span class="t" style="top:410.20px;font-size:11.8px;color:#6d6d6d;left:554.60px;transform:scaleX(1.0382);transform-origin:left center;">11/9/2021 4:09 PM</span>
<span class="t" style="top:410.20px;font-size:11.8px;color:#6d6d6d;left:704.00px;transform:scaleX(0.9866);transform-origin:left center;">BMP File</span>
<span class="t" style="top:410.20px;font-size:11.8px;color:#6d6d6d;right:701.50px;transform:scaleX(0.9490);transform-origin:right center;">19 KB</span>
<svg class="a" style="left:282.8px;top:432.2px" width="16" height="16" viewBox="0 0 16 16" ><path d="M4.5 0.5 H11.5 L14.5 3.5 V14.5 H4.5 Z" fill="#fdfdfd" stroke="#9c9c9c" stroke-width="1"/><path d="M11.5 0.5 V3.5 H14.5" fill="#f0f0f0" stroke="#9c9c9c" stroke-width="0.9"/><circle cx="5.3" cy="10.2" r="3.6" fill="#cfd3d8" stroke="#a9afb7" stroke-width="1.8" stroke-dasharray="1.5 1.33"/><circle cx="5.3" cy="10.2" r="3" fill="#d3d7db" stroke="#b4bac1" stroke-width=".5"/><circle cx="5.3" cy="10.2" r="1.3" fill="#3f4650"/></svg>
<span class="t" style="top:432.70px;font-size:11.8px;color:#242424;left:305.00px;transform:scaleX(1.0238);transform-origin:left center;">fanuc.ini</span>
<span class="t" style="top:432.70px;font-size:11.8px;color:#6d6d6d;left:554.60px;transform:scaleX(1.0382);transform-origin:left center;">11/9/2021 4:09 PM</span>
<span class="t" style="top:432.70px;font-size:11.8px;color:#6d6d6d;left:704.00px;transform:scaleX(1.0484);transform-origin:left center;">Configuration setti...</span>
<span class="t" style="top:432.70px;font-size:11.8px;color:#6d6d6d;right:701.50px;transform:scaleX(0.9481);transform-origin:right center;">1 KB</span>
<svg class="a" style="left:285.8px;top:454.7px" width="13" height="15" viewBox="0 0 13 15" ><path d="M1.5 0.5 H8.5 L11.5 3.5 V14.5 H1.5 Z" fill="#fdfdfd" stroke="#9c9c9c" stroke-width="1"/><path d="M8.5 0.5 V3.5 H11.5" fill="#f0f0f0" stroke="#9c9c9c" stroke-width="0.9"/></svg>
<span class="t" style="top:455.20px;font-size:11.8px;color:#242424;left:305.00px;transform:scaleX(1.0693);transform-origin:left center;">layout.bin</span>
<span class="t" style="top:455.20px;font-size:11.8px;color:#6d6d6d;left:554.60px;transform:scaleX(1.0382);transform-origin:left center;">11/9/2021 4:09 PM</span>
<span class="t" style="top:455.20px;font-size:11.8px;color:#6d6d6d;left:704.00px;transform:scaleX(1.0130);transform-origin:left center;">BIN File</span>
<span class="t" style="top:455.20px;font-size:11.8px;color:#6d6d6d;right:701.50px;transform:scaleX(0.9490);transform-origin:right center;">14 KB</span>
<svg class="a" style="left:285.8px;top:477.2px" width="13" height="15" viewBox="0 0 13 15" ><path d="M1.5 0.5 H9.5 L11.5 2.5 V14.5 H1.5 Z" fill="#fdfdfd" stroke="#949494" stroke-width="1"/><path d="M9.5 0.5 V2.5 H11.5" fill="none" stroke="#949494" stroke-width="0.8"/><path d="M3 3.5H8.5M3 5.5H10M3 7.5H10M3 9.5H10M3 11.5H10" stroke="#b4b4b4" stroke-width="1"/></svg>
<span class="t" style="top:477.70px;font-size:11.8px;color:#242424;left:305.00px;transform:scaleX(1.0295);transform-origin:left center;">license.txt</span>
<span class="t" style="top:477.70px;font-size:11.8px;color:#6d6d6d;left:554.60px;transform:scaleX(1.0382);transform-origin:left center;">11/9/2021 4:09 PM</span>
<span class="t" style="top:477.70px;font-size:11.8px;color:#6d6d6d;left:704.00px;transform:scaleX(1.0548);transform-origin:left center;">Text Document</span>
<span class="t" style="top:477.70px;font-size:11.8px;color:#6d6d6d;right:701.50px;transform:scaleX(0.9481);transform-origin:right center;">3 KB</span>
<svg class="a" style="left:285.8px;top:499.7px" width="13" height="15" viewBox="0 0 13 15" ><path d="M1.5 0.5 H9.5 L11.5 2.5 V14.5 H1.5 Z" fill="#fdfdfd" stroke="#949494" stroke-width="1"/><path d="M9.5 0.5 V2.5 H11.5" fill="none" stroke="#949494" stroke-width="0.8"/><path d="M3 3.5H8.5M3 5.5H10M3 7.5H10M3 9.5H10M3 11.5H10" stroke="#b4b4b4" stroke-width="1"/></svg>
<span class="t" style="top:500.20px;font-size:11.8px;color:#242424;left:305.00px;transform:scaleX(1.0242);transform-origin:left center;">License_Agreement_eng.txt</span>
<span class="t" style="top:500.20px;font-size:11.8px;color:#6d6d6d;left:554.60px;transform:scaleX(1.0382);transform-origin:left center;">11/9/2021 4:09 PM</span>
<span class="t" style="top:500.20px;font-size:11.8px;color:#6d6d6d;left:704.00px;transform:scaleX(1.0548);transform-origin:left center;">Text Document</span>
<span class="t" style="top:500.20px;font-size:11.8px;color:#6d6d6d;right:701.50px;transform:scaleX(0.9481);transform-origin:right center;">3 KB</span>
<svg class="a" style="left:285.8px;top:522.2px" width="13" height="15" viewBox="0 0 13 15" ><path d="M1.5 0.5 H9.5 L11.5 2.5 V14.5 H1.5 Z" fill="#fdfdfd" stroke="#949494" stroke-width="1"/><path d="M9.5 0.5 V2.5 H11.5" fill="none" stroke="#949494" stroke-width="0.8"/><path d="M3 3.5H8.5M3 5.5H10M3 7.5H10M3 9.5H10M3 11.5H10" stroke="#b4b4b4" stroke-width="1"/></svg>
<span class="t" style="top:522.70px;font-size:11.8px;color:#242424;left:305.00px;transform:scaleX(1.0242);transform-origin:left center;">License_Agreement_jpn.txt</span>
<span class="t" style="top:522.70px;font-size:11.8px;color:#6d6d6d;left:554.60px;transform:scaleX(1.0382);transform-origin:left center;">11/9/2021 4:09 PM</span>
<span class="t" style="top:522.70px;font-size:11.8px;color:#6d6d6d;left:704.00px;transform:scaleX(1.0548);transform-origin:left center;">Text Document</span>
<span class="t" style="top:522.70px;font-size:11.8px;color:#6d6d6d;right:701.50px;transform:scaleX(0.9481);transform-origin:right center;">2 KB</span>
<svg class="a" style="left:282.8px;top:544.7px" width="16" height="16" viewBox="0 0 16 16" ><path d="M4.5 0.5 H11.5 L14.5 3.5 V14.5 H4.5 Z" fill="#fdfdfd" stroke="#9c9c9c" stroke-width="1"/><path d="M11.5 0.5 V3.5 H14.5" fill="#f0f0f0" stroke="#9c9c9c" stroke-width="0.9"/><circle cx="5.3" cy="10.2" r="3.6" fill="#cfd3d8" stroke="#a9afb7" stroke-width="1.8" stroke-dasharray="1.5 1.33"/><circle cx="5.3" cy="10.2" r="3" fill="#d3d7db" stroke="#b4bac1" stroke-width=".5"/><circle cx="5.3" cy="10.2" r="1.3" fill="#3f4650"/></svg>
<span class="t" style="top:545.20px;font-size:11.8px;color:#242424;left:305.00px;transform:scaleX(1.0466);transform-origin:left center;">patch.ini</span>
<span class="t" style="top:545.20px;font-size:11.8px;color:#6d6d6d;left:554.60px;transform:scaleX(1.0382);transform-origin:left center;">11/9/2021 4:09 PM</span>
<span class="t" style="top:545.20px;font-size:11.8px;color:#6d6d6d;left:704.00px;transform:scaleX(1.0484);transform-origin:left center;">Configuration setti...</span>
<span class="t" style="top:545.20px;font-size:11.8px;color:#6d6d6d;right:701.50px;transform:scaleX(0.9481);transform-origin:right center;">4 KB</span>
<svg class="a" style="left:285.8px;top:567.2px" width="13" height="15" viewBox="0 0 13 15" ><path d="M1.5 0.5 H9.5 L11.5 2.5 V14.5 H1.5 Z" fill="#fdfdfd" stroke="#949494" stroke-width="1"/><path d="M9.5 0.5 V2.5 H11.5" fill="none" stroke="#949494" stroke-width="0.8"/><path d="M3 3.5H8.5M3 5.5H10M3 7.5H10M3 9.5H10M3 11.5H10" stroke="#b4b4b4" stroke-width="1"/></svg>
<span class="t" style="top:567.70px;font-size:11.8px;color:#242424;left:305.00px;transform:scaleX(1.0550);transform-origin:left center;">readme.txt</span>
<span class="t" style="top:567.70px;font-size:11.8px;color:#6d6d6d;left:554.60px;transform:scaleX(1.0382);transform-origin:left center;">11/9/2021 4:09 PM</span>
<span class="t" style="top:567.70px;font-size:11.8px;color:#6d6d6d;left:704.00px;transform:scaleX(1.0548);transform-origin:left center;">Text Document</span>
<span class="t" style="top:567.70px;font-size:11.8px;color:#6d6d6d;right:701.50px;transform:scaleX(0.9490);transform-origin:right center;">13 KB</span>
<svg class="a" style="left:285.8px;top:589.7px" width="13" height="15" viewBox="0 0 13 15" ><path d="M1.5 0.5 H9.5 L11.5 2.5 V14.5 H1.5 Z" fill="#fdfdfd" stroke="#949494" stroke-width="1"/><path d="M9.5 0.5 V2.5 H11.5" fill="none" stroke="#949494" stroke-width="0.8"/><path d="M3 3.5H8.5M3 5.5H10M3 7.5H10M3 9.5H10M3 11.5H10" stroke="#b4b4b4" stroke-width="1"/></svg>
<span class="t" style="top:590.20px;font-size:11.8px;color:#242424;left:305.00px;transform:scaleX(1.0628);transform-origin:left center;">readmeja.txt</span>
<span class="t" style="top:590.20px;font-size:11.8px;color:#6d6d6d;left:554.60px;transform:scaleX(1.0382);transform-origin:left center;">11/9/2021 4:09 PM</span>
<span class="t" style="top:590.20px;font-size:11.8px;color:#6d6d6d;left:704.00px;transform:scaleX(1.0548);transform-origin:left center;">Text Document</span>
<span class="t" style="top:590.20px;font-size:11.8px;color:#6d6d6d;right:701.50px;transform:scaleX(0.9481);transform-origin:right center;">6 KB</span>
<svg class="a" style="left:282.8px;top:612.2px" width="16" height="16" viewBox="0 0 16 16" ><path d="M4.5 0.5 H11.5 L14.5 3.5 V14.5 H4.5 Z" fill="#fdfdfd" stroke="#9c9c9c" stroke-width="1"/><path d="M11.5 0.5 V3.5 H14.5" fill="#f0f0f0" stroke="#9c9c9c" stroke-width="0.9"/><circle cx="5.3" cy="10.2" r="3.6" fill="#cfd3d8" stroke="#a9afb7" stroke-width="1.8" stroke-dasharray="1.5 1.33"/><circle cx="5.3" cy="10.2" r="3" fill="#d3d7db" stroke="#b4bac1" stroke-width=".5"/><circle cx="5.3" cy="10.2" r="1.3" fill="#3f4650"/></svg>
<span class="t" style="top:612.70px;font-size:11.8px;color:#242424;left:305.00px;transform:scaleX(1.0261);transform-origin:left center;">resourceja.ini</span>
<span class="t" style="top:612.70px;font-size:11.8px;color:#6d6d6d;left:554.60px;transform:scaleX(1.0382);transform-origin:left center;">11/9/2021 4:09 PM</span>
<span class="t" style="top:612.70px;font-size:11.8px;color:#6d6d6d;left:704.00px;transform:scaleX(1.0484);transform-origin:left center;">Configuration setti...</span>
<span class="t" style="top:612.70px;font-size:11.8px;color:#6d6d6d;right:701.50px;transform:scaleX(0.9481);transform-origin:right center;">4 KB</span>
<svg class="a" style="left:285.8px;top:634.7px" width="13" height="15" viewBox="0 0 13 15" ><path d="M1.5 0.5 H9.5 L11.5 2.5 V14.5 H1.5 Z" fill="#fdfdfd" stroke="#949494" stroke-width="1"/><path d="M9.5 0.5 V2.5 H11.5" fill="none" stroke="#949494" stroke-width="0.8"/><path d="M3 3.5H8.5M3 5.5H10M3 7.5H10M3 9.5H10M3 11.5H10" stroke="#b4b4b4" stroke-width="1"/></svg>
<span class="t" style="top:635.20px;font-size:11.8px;color:#242424;left:305.00px;transform:scaleX(0.9487);transform-origin:left center;">ROBOGUIDE_ReleaseNote_eng.txt</span>
<span class="t" style="top:635.20px;font-size:11.8px;color:#6d6d6d;left:554.60px;transform:scaleX(1.0382);transform-origin:left center;">11/9/2021 4:09 PM</span>
<span class="t" style="top:635.20px;font-size:11.8px;color:#6d6d6d;left:704.00px;transform:scaleX(1.0548);transform-origin:left center;">Text Document</span>
<span class="t" style="top:635.20px;font-size:11.8px;color:#6d6d6d;right:701.50px;transform:scaleX(0.9481);transform-origin:right center;">3 KB</span>
<svg class="a" style="left:285.8px;top:657.2px" width="13" height="15" viewBox="0 0 13 15" ><path d="M1.5 0.5 H9.5 L11.5 2.5 V14.5 H1.5 Z" fill="#fdfdfd" stroke="#949494" stroke-width="1"/><path d="M9.5 0.5 V2.5 H11.5" fill="none" stroke="#949494" stroke-width="0.8"/><path d="M3 3.5H8.5M3 5.5H10M3 7.5H10M3 9.5H10M3 11.5H10" stroke="#b4b4b4" stroke-width="1"/></svg>
<span class="t" style="top:657.70px;font-size:11.8px;color:#242424;left:305.00px;transform:scaleX(0.9487);transform-origin:left center;">ROBOGUIDE_ReleaseNote_jpn.txt</span>
<span class="t" style="top:657.70px;font-size:11.8px;color:#6d6d6d;left:554.60px;transform:scaleX(1.0382);transform-origin:left center;">11/9/2021 4:09 PM</span>
<span class="t" style="top:657.70px;font-size:11.8px;color:#6d6d6d;left:704.00px;transform:scaleX(1.0548);transform-origin:left center;">Text Document</span>
<span class="t" style="top:657.70px;font-size:11.8px;color:#6d6d6d;right:701.50px;transform:scaleX(0.9481);transform-origin:right center;">3 KB</span>
<svg class="a" style="left:284.2px;top:678.0px" width="17" height="17" viewBox="0 0 17 17" ><rect x="0" y="0" width="17" height="17" fill="url(#su)"/><path d="M4.6 1.6H6.6V4.4L8.2 5V5.9H1.6V5L4.6 4.4Z" fill="#fff"/><path d="M1.8 6.5H7.6" stroke="#0a0f2a" stroke-width=".9"/><path d="M8.7 2H10.2L12 6.2V9.4L4.8 10.2V8.8L8.7 7.4Z" fill="#f4f6f8"/><path d="M0.4 9.6C2 12.8 6 14.6 11 14.8L11 16.2H0.4Z" fill="#dfe5ec"/><path d="M4 10.9H9.4" stroke="#05070f" stroke-width="1"/><path d="M0.4 16.4H9" stroke="#0b0b0b" stroke-width="1"/><path d="M13 8.6C12 9.4 10.6 9.8 9.3 9.8V12.6C9.3 14.8 11 16 13 16.7C15 16 16.7 14.8 16.7 12.6V9.8C15.4 9.8 14 9.4 13 8.6Z" fill="#1f6fd6"/><path d="M13 8.6C14 9.4 15.4 9.8 16.7 9.8V12.6H13Z" fill="#fbbf23"/><path d="M9.3 12.6H13V16.7C11 16 9.3 14.8 9.3 12.6Z" fill="#fbbf23"/><path d="M14.5 17H17V14Z" fill="#fff"/></svg>
<span class="t" style="top:680.20px;font-size:11.8px;color:#242424;left:305.00px;transform:scaleX(1.0064);transform-origin:left center;">setup.exe</span>
<span class="t" style="top:680.20px;font-size:11.8px;color:#6d6d6d;left:554.60px;transform:scaleX(1.0333);transform-origin:left center;">11/10/2005 7:35 PM</span>
<span class="t" style="top:680.20px;font-size:11.8px;color:#6d6d6d;left:704.00px;transform:scaleX(1.1054);transform-origin:left center;">Application</span>
<span class="t" style="top:680.20px;font-size:11.8px;color:#6d6d6d;right:701.50px;transform:scaleX(0.9887);transform-origin:right center;">115 KB</span>
<svg class="a" style="left:285.8px;top:702.2px" width="13" height="15" viewBox="0 0 13 15" ><path d="M1.5 0.5 H8.5 L11.5 3.5 V14.5 H1.5 Z" fill="#fdfdfd" stroke="#9c9c9c" stroke-width="1"/><path d="M8.5 0.5 V3.5 H11.5" fill="#f0f0f0" stroke="#9c9c9c" stroke-width="0.9"/></svg>
<span class="t" style="top:702.70px;font-size:11.8px;color:#242424;left:305.00px;transform:scaleX(1.0536);transform-origin:left center;">setup.ibt</span>
<span class="t" style="top:702.70px;font-size:11.8px;color:#6d6d6d;left:554.60px;transform:scaleX(1.0382);transform-origin:left center;">11/9/2021 4:09 PM</span>
<span class="t" style="top:702.70px;font-size:11.8px;color:#6d6d6d;left:704.00px;transform:scaleX(0.9645);transform-origin:left center;">IBT File</span>
<span class="t" style="top:702.70px;font-size:11.8px;color:#6d6d6d;right:701.50px;transform:scaleX(0.9818);transform-origin:right center;">367 KB</span>
<svg class="a" style="left:282.8px;top:724.7px" width="16" height="16" viewBox="0 0 16 16" ><path d="M4.5 0.5 H11.5 L14.5 3.5 V14.5 H4.5 Z" fill="#fdfdfd" stroke="#9c9c9c" stroke-width="1"/><path d="M11.5 0.5 V3.5 H14.5" fill="#f0f0f0" stroke="#9c9c9c" stroke-width="0.9"/><circle cx="5.3" cy="10.2" r="3.6" fill="#cfd3d8" stroke="#a9afb7" stroke-width="1.8" stroke-dasharray="1.5 1.33"/><circle cx="5.3" cy="10.2" r="3" fill="#d3d7db" stroke="#b4bac1" stroke-width=".5"/><circle cx="5.3" cy="10.2" r="1.3" fill="#3f4650"/></svg>
<span class="t" style="top:725.20px;font-size:11.8px;color:#242424;left:305.00px;transform:scaleX(1.0420);transform-origin:left center;">setup.ini</span>
<span class="t" style="top:725.20px;font-size:11.8px;color:#6d6d6d;left:554.60px;transform:scaleX(1.0382);transform-origin:left center;">11/9/2021 4:09 PM</span>
<span class="t" style="top:725.20px;font-size:11.8px;color:#6d6d6d;left:704.00px;transform:scaleX(1.0484);transform-origin:left center;">Configuration setti...</span>
<span class="t" style="top:725.20px;font-size:11.8px;color:#6d6d6d;right:701.50px;transform:scaleX(0.9481);transform-origin:right center;">1 KB</span>
<svg class="a" style="left:285.8px;top:747.2px" width="13" height="15" viewBox="0 0 13 15" ><path d="M1.5 0.5 H8.5 L11.5 3.5 V14.5 H1.5 Z" fill="#fdfdfd" stroke="#9c9c9c" stroke-width="1"/><path d="M8.5 0.5 V3.5 H11.5" fill="#f0f0f0" stroke="#9c9c9c" stroke-width="0.9"/></svg>
<span class="t" style="top:747.70px;font-size:11.8px;color:#242424;left:305.00px;transform:scaleX(1.0271);transform-origin:left center;">setup.inx</span>
<span class="t" style="top:747.70px;font-size:11.8px;color:#6d6d6d;left:554.60px;transform:scaleX(1.0382);transform-origin:left center;">11/9/2021 4:09 PM</span>
<span class="t" style="top:747.70px;font-size:11.8px;color:#6d6d6d;left:704.00px;transform:scaleX(1.0011);transform-origin:left center;">INX File</span>
<span class="t" style="top:747.70px;font-size:11.8px;color:#6d6d6d;right:701.50px;transform:scaleX(0.9818);transform-origin:right center;">340 KB</span>
<svg class="a" style="left:285.8px;top:769.7px" width="13" height="15" viewBox="0 0 13 15" ><path d="M1.5 0.5 H9.5 L11.5 2.5 V14.5 H1.5 Z" fill="#fdfdfd" stroke="#949494" stroke-width="1"/><path d="M9.5 0.5 V2.5 H11.5" fill="none" stroke="#949494" stroke-width="0.8"/><path d="M3 3.5H8.5M3 5.5H10M3 7.5H10M3 9.5H10M3 11.5H10" stroke="#b4b4b4" stroke-width="1"/></svg>
<span class="t" style="top:770.20px;font-size:11.8px;color:#242424;left:305.00px;transform:scaleX(1.0104);transform-origin:left center;">Trial_ReleaseNote_eng.txt</span>
<span class="t" style="top:770.20px;font-size:11.8px;color:#6d6d6d;left:554.60px;transform:scaleX(1.0440);transform-origin:left center;">7/3/2018 10:09 AM</span>
<span class="t" style="top:770.20px;font-size:11.8px;color:#6d6d6d;left:704.00px;transform:scaleX(1.0548);transform-origin:left center;">Text Document</span>
<span class="t" style="top:770.20px;font-size:11.8px;color:#6d6d6d;right:701.50px;transform:scaleX(0.9481);transform-origin:right center;">1 KB</span>
<svg class="a" style="left:285.8px;top:792.2px" width="13" height="15" viewBox="0 0 13 15" ><path d="M1.5 0.5 H9.5 L11.5 2.5 V14.5 H1.5 Z" fill="#fdfdfd" stroke="#949494" stroke-width="1"/><path d="M9.5 0.5 V2.5 H11.5" fill="none" stroke="#949494" stroke-width="0.8"/><path d="M3 3.5H8.5M3 5.5H10M3 7.5H10M3 9.5H10M3 11.5H10" stroke="#b4b4b4" stroke-width="1"/></svg>
<span class="t" style="top:792.70px;font-size:11.8px;color:#242424;left:305.00px;transform:scaleX(1.0126);transform-origin:left center;">Trial_ReleaseNote_jpn.txt</span>
<span class="t" style="top:792.70px;font-size:11.8px;color:#6d6d6d;left:554.60px;transform:scaleX(1.0440);transform-origin:left center;">7/3/2018 10:07 AM</span>
<span class="t" style="top:792.70px;font-size:11.8px;color:#6d6d6d;left:704.00px;transform:scaleX(1.0548);transform-origin:left center;">Text Document</span>
<span class="t" style="top:792.70px;font-size:11.8px;color:#6d6d6d;right:701.50px;transform:scaleX(0.9481);transform-origin:right center;">2 KB</span>
<svg class="a" style="left:284px;top:812.8px" width="17.2" height="17.2" viewBox="0 0 26 26" ><circle cx="13" cy="13" r="13" fill="#1583d8"/><path d="M0.5 10.5C2 4.2 7.4 0 13 0C20.5 0 26 5.5 26 11.5C26 15.6 22.6 18 19 18C16.5 18 14.8 17 14.5 15.6C15.8 14 15.5 10.8 12.5 10.5C8.2 7.6 3 7.8 0.5 10.5Z" fill="url(#eg)"/><path d="M10.6 11.4C7.5 14 6.8 19.5 10 22.8C13.2 26.2 19.8 25.6 23.9 19.6C20.5 21 14.5 20.8 12 17.5C10.6 15.6 10.3 13 10.6 11.4Z" fill="#0f58a6"/><path d="M12.7 10.6C10.6 10.4 9.9 12.6 11 14.2C12 17.2 14.6 19.4 18.6 19.5C21.4 19.5 24 18.7 25.6 17.2L24.4 16C22 18.2 17 18.8 14.6 15.7C15.6 13.4 14.8 10.9 12.7 10.6Z" fill="#fff"/></svg>
<span class="t" style="top:815.20px;font-size:11.8px;color:#242424;left:305.00px;transform:scaleX(1.0604);transform-origin:left center;">welcome.htm</span>
<span class="t" style="top:815.20px;font-size:11.8px;color:#6d6d6d;left:554.60px;transform:scaleX(1.0333);transform-origin:left center;">11/2/2021 12:09 PM</span>
<span class="t" style="top:815.20px;font-size:11.8px;color:#6d6d6d;left:704.00px;transform:scaleX(1.0356);transform-origin:left center;">Microsoft Edge HT...</span>
<span class="t" style="top:815.20px;font-size:11.8px;color:#6d6d6d;right:701.50px;transform:scaleX(0.9645);transform-origin:right center;">28 KB</span>
<div class="a" style="left:264px;top:186px;width:1319px;height:25.8px;background:#fff"></div>
<div class="a" style="left:547.5px;top:185.5px;width:1px;height:26px;background:#e5e5e5"></div>
<div class="a" style="left:697.5px;top:185.5px;width:1px;height:26px;background:#e5e5e5"></div>
<div class="a" style="left:823px;top:185.5px;width:1px;height:26px;background:#e5e5e5"></div>
<div class="a" style="left:906px;top:185.5px;width:1px;height:26px;background:#e5e5e5"></div>
<span class="t" style="top:191.30px;font-size:12px;color:#566b88;left:283.00px;transform:scaleX(1.0151);transform-origin:left center;">Name</span>
<span class="t" style="top:191.30px;font-size:12px;color:#566b88;left:555.00px;transform:scaleX(1.0534);transform-origin:left center;">Date modified</span>
<span class="t" style="top:191.30px;font-size:12px;color:#566b88;left:704.40px;transform:scaleX(0.9456);transform-origin:left center;">Type</span>
<span class="t" style="top:191.30px;font-size:12px;color:#566b88;left:829.40px;transform:scaleX(0.9253);transform-origin:left center;">Size</span>
<svg class="a" style="left:407px;top:185px" width="10" height="6" viewBox="0 0 10 6" ><path d="M1 5L5 1L9 5" fill="none" stroke="#8a8a8a" stroke-width="1"/></svg>
<div class="a" style="left:212.8px;top:655.8px;width:61.4px;height:61.4px;border-radius:50%;background:#4c5ffa"></div>
<span class="a" style="left:213.5px;top:661.0px;width:60px;height:50px;line-height:50px;text-align:center;font-size:44px;font-weight:700;color:#fff">1</span>
<div class="a" style="left:371.7px;top:208.9px;width:61.4px;height:61.4px;border-radius:50%;background:#4c5ffa"></div>
<span class="a" style="left:372.4px;top:214.1px;width:60px;height:50px;line-height:50px;text-align:center;font-size:44px;font-weight:700;color:#fff">2</span>
</main>
<menu class="sec" aria-label="Context menu">
<div class="a" style="left:434.5px;top:197px;width:303.5px;height:490.5px;background:#eeeeee;border:1px solid #a0a0a0;box-sizing:border-box;box-shadow:3px 3px 4px rgba(0,0,0,.35)"></div>
<div class="a" style="left:437px;top:225px;width:298px;height:23px;background:#fff"></div>
<span class="t" style="top:206.30px;font-size:12.8px;color:#1a1a1a;font-weight:700;left:470.00px;transform:scaleX(0.9169);transform-origin:left center;">Open</span>
<span class="t" style="top:229.55px;font-size:12.8px;color:#1a1a1a;left:470.00px;transform:scaleX(0.9570);transform-origin:left center;">Run as administrator</span>
<span class="t" style="top:253.05px;font-size:12.8px;color:#1a1a1a;left:470.00px;transform:scaleX(0.9338);transform-origin:left center;">Share with Skype</span>
<span class="t" style="top:276.30px;font-size:12.8px;color:#1a1a1a;left:470.00px;transform:scaleX(1.0055);transform-origin:left center;">Troubleshoot compatibility</span>
<span class="t" style="top:299.55px;font-size:12.8px;color:#1a1a1a;left:470.00px;transform:scaleX(0.9627);transform-origin:left center;">Scan with Microsoft Defender...</span>
<span class="t" style="top:323.05px;font-size:12.8px;color:#1a1a1a;left:470.00px;transform:scaleX(0.8783);transform-origin:left center;">Share</span>
<span class="t" style="top:353.55px;font-size:12.8px;color:#1a1a1a;left:470.00px;transform:scaleX(0.9173);transform-origin:left center;">Give access to</span>
<span class="t" style="top:377.05px;font-size:12.8px;color:#1a1a1a;left:470.00px;transform:scaleX(0.9515);transform-origin:left center;">Add to archive...</span>
<span class="t" style="top:400.30px;font-size:12.8px;color:#1a1a1a;left:470.00px;transform:scaleX(0.9826);transform-origin:left center;">Add to "setup.rar"</span>
<span class="t" style="top:423.55px;font-size:12.8px;color:#1a1a1a;left:470.00px;transform:scaleX(0.9349);transform-origin:left center;">Compress and email...</span>
<span class="t" style="top:447.05px;font-size:12.8px;color:#1a1a1a;left:470.00px;transform:scaleX(0.9654);transform-origin:left center;">Compress to "setup.rar" and email</span>
<span class="t" style="top:470.55px;font-size:12.8px;color:#1a1a1a;left:470.00px;transform:scaleX(0.9395);transform-origin:left center;">Restore previous versions</span>
<span class="t" style="top:500.95px;font-size:12.8px;color:#1a1a1a;left:470.00px;transform:scaleX(0.9518);transform-origin:left center;">Send to</span>
<span class="t" style="top:531.95px;font-size:12.8px;color:#1a1a1a;left:470.00px;transform:scaleX(0.8935);transform-origin:left center;">Cut</span>
<span class="t" style="top:555.55px;font-size:12.8px;color:#1a1a1a;left:470.00px;transform:scaleX(0.9372);transform-origin:left center;">Copy</span>
<span class="t" style="top:586.30px;font-size:12.8px;color:#1a1a1a;left:470.00px;transform:scaleX(0.9463);transform-origin:left center;">Create shortcut</span>
<span class="t" style="top:609.75px;font-size:12.8px;color:#1a1a1a;left:470.00px;transform:scaleX(0.9865);transform-origin:left center;">Delete</span>
<span class="t" style="top:632.85px;font-size:12.8px;color:#1a1a1a;left:470.00px;transform:scaleX(0.9240);transform-origin:left center;">Rename</span>
<span class="t" style="top:663.80px;font-size:12.8px;color:#1a1a1a;left:470.00px;transform:scaleX(0.9532);transform-origin:left center;">Properties</span>
<div class="a" style="left:445px;top:344.5px;width:281px;height:1px;background:#919191"></div>
<div class="a" style="left:445px;top:492.0px;width:281px;height:1px;background:#919191"></div>
<div class="a" style="left:445px;top:522.9px;width:281px;height:1px;background:#919191"></div>
<div class="a" style="left:445px;top:577.0px;width:281px;height:1px;background:#919191"></div>
<div class="a" style="left:445px;top:654.8px;width:281px;height:1px;background:#919191"></div>
<svg class="a" style="left:717px;top:353px" width="8" height="16" viewBox="0 0 8 16" ><path d="M1 1L7 8L1 15" fill="none" stroke="#222" stroke-width="1.1"/></svg>
<svg class="a" style="left:717px;top:500.4px" width="8" height="16" viewBox="0 0 8 16" ><path d="M1 1L7 8L1 15" fill="none" stroke="#222" stroke-width="1.1"/></svg>
<svg class="a" style="left:445px;top:228px" width="16.5" height="16.5" viewBox="0 0 16 16" ><path d="M8 0.5C6 2 3.5 2.6 1 2.6V8C1 12 4.5 14.6 8 15.6C11.5 14.6 15 12 15 8V2.6C12.5 2.6 10 2 8 0.5Z" fill="#2f6fd0"/><path d="M8 0.5C6 2 3.5 2.6 1 2.6V8H8Z" fill="#2a62c4"/><path d="M8 0.5C10 2 12.5 2.6 15 2.6V8H8Z" fill="#f6c029"/><path d="M1 8C1 12 4.5 14.6 8 15.6V8Z" fill="#f6c029"/><path d="M8 8V15.6C11.5 14.6 15 12 15 8Z" fill="#2a62c4"/><path d="M8 0.5C6 2 3.5 2.6 1 2.6V8C1 12 4.5 14.6 8 15.6C11.5 14.6 15 12 15 8V2.6C12.5 2.6 10 2 8 0.5Z" fill="none" stroke="#454a52" stroke-width=".7"/></svg>
<svg class="a" style="left:445px;top:251.8px" width="16" height="16" viewBox="0 0 16 16" ><circle cx="8" cy="8" r="6.6" fill="#17a9ec"/><circle cx="4.2" cy="4.2" r="3.6" fill="#17a9ec"/><circle cx="11.8" cy="11.8" r="3.6" fill="#17a9ec"/><text x="8" y="11.6" text-anchor="middle" font-family="Liberation Sans, sans-serif" font-weight="700" font-size="10" fill="#fff">S</text></svg>
<svg class="a" style="left:445px;top:298.2px" width="16.6" height="16.6" viewBox="0 0 17 17" ><rect width="17" height="17" fill="#1d73d4"/><path d="M8.5 1.6C6.8 3 4.4 3.5 2 3.5V8.6C2 12.2 5 14.6 8.5 15.8C12 14.6 15 12.2 15 8.6V3.5C12.6 3.5 10.2 3 8.5 1.6Z" fill="#fff"/><path d="M8.5 1.6V15.8M2 8.4H15" stroke="#7db4ee" stroke-width=".9"/></svg>
<svg class="a" style="left:444.5px;top:321.3px" width="17" height="16" viewBox="0 0 17 16" ><path d="M1 6.5V14.5H12.5V11" fill="none" stroke="#222" stroke-width="1.1"/><path d="M3.5 11C4 7.5 6.5 5.2 10 5V2L15.5 6.8L10 11.5V8.4C7.5 8.3 5.2 9 3.5 11Z" fill="none" stroke="#222" stroke-width="1.1" stroke-linejoin="round"/></svg>
<svg class="a" style="left:445px;top:376.7px" width="17.0" height="15.0" viewBox="0 0 17 15" ><rect x="0" y="0" width="17" height="5.1" fill="url(#rr)"/><rect x="0" y="5.1" width="17" height="5" fill="url(#rb)"/><rect x="0" y="10.1" width="17" height="4.9" fill="url(#rg)"/><path d="M2.3 1.2V4.2M2.3 6.2V9.2M2.3 11.2V14.6" stroke="#f2b223" stroke-width="1.1"/><rect x="6" y="0" width="5.2" height="8" fill="url(#ry)"/><path d="M7.2 1.5H10M7.4 4.2H9.8" stroke="#c97a10" stroke-width=".8"/><rect x="6" y="10.6" width="5.2" height="4.4" fill="#e8790f"/><rect x="6" y="14" width="5.2" height="1" fill="#c22a0a"/><path d="M5.6 6.3V8.2C5.6 10.6 11.6 10.6 11.6 8.2V6.3" fill="none" stroke="#fbf7f4" stroke-width="1.5"/><path d="M8.6 7.6V10.8" stroke="#9aa7b4" stroke-width="1.2"/><path d="M6.4 10.9H10.8" stroke="#5a4a48" stroke-width=".7"/></svg>
<svg class="a" style="left:445px;top:399.95px" width="17.0" height="15.0" viewBox="0 0 17 15" ><rect x="0" y="0" width="17" height="5.1" fill="url(#rr)"/><rect x="0" y="5.1" width="17" height="5" fill="url(#rb)"/><rect x="0" y="10.1" width="17" height="4.9" fill="url(#rg)"/><path d="M2.3 1.2V4.2M2.3 6.2V9.2M2.3 11.2V14.6" stroke="#f2b223" stroke-width="1.1"/><rect x="6" y="0" width="5.2" height="8" fill="url(#ry)"/><path d="M7.2 1.5H10M7.4 4.2H9.8" stroke="#c97a10" stroke-width=".8"/><rect x="6" y="10.6" width="5.2" height="4.4" fill="#e8790f"/><rect x="6" y="14" width="5.2" height="1" fill="#c22a0a"/><path d="M5.6 6.3V8.2C5.6 10.6 11.6 10.6 11.6 8.2V6.3" fill="none" stroke="#fbf7f4" stroke-width="1.5"/><path d="M8.6 7.6V10.8" stroke="#9aa7b4" stroke-width="1.2"/><path d="M6.4 10.9H10.8" stroke="#5a4a48" stroke-width=".7"/></svg>
<svg class="a" style="left:445px;top:423.2px" width="17.0" height="15.0" viewBox="0 0 17 15" ><rect x="0" y="0" width="17" height="5.1" fill="url(#rr)"/><rect x="0" y="5.1" width="17" height="5" fill="url(#rb)"/><rect x="0" y="10.1" width="17" height="4.9" fill="url(#rg)"/><path d="M2.3 1.2V4.2M2.3 6.2V9.2M2.3 11.2V14.6" stroke="#f2b223" stroke-width="1.1"/><rect x="6" y="0" width="5.2" height="8" fill="url(#ry)"/><path d="M7.2 1.5H10M7.4 4.2H9.8" stroke="#c97a10" stroke-width=".8"/><rect x="6" y="10.6" width="5.2" height="4.4" fill="#e8790f"/><rect x="6" y="14" width="5.2" height="1" fill="#c22a0a"/><path d="M5.6 6.3V8.2C5.6 10.6 11.6 10.6 11.6 8.2V6.3" fill="none" stroke="#fbf7f4" stroke-width="1.5"/><path d="M8.6 7.6V10.8" stroke="#9aa7b4" stroke-width="1.2"/><path d="M6.4 10.9H10.8" stroke="#5a4a48" stroke-width=".7"/></svg>
<svg class="a" style="left:445px;top:446.7px" width="17.0" height="15.0" viewBox="0 0 17 15" ><rect x="0" y="0" width="17" height="5.1" fill="url(#rr)"/><rect x="0" y="5.1" width="17" height="5" fill="url(#rb)"/><rect x="0" y="10.1" width="17" height="4.9" fill="url(#rg)"/><path d="M2.3 1.2V4.2M2.3 6.2V9.2M2.3 11.2V14.6" stroke="#f2b223" stroke-width="1.1"/><rect x="6" y="0" width="5.2" height="8" fill="url(#ry)"/><path d="M7.2 1.5H10M7.4 4.2H9.8" stroke="#c97a10" stroke-width=".8"/><rect x="6" y="10.6" width="5.2" height="4.4" fill="#e8790f"/><rect x="6" y="14" width="5.2" height="1" fill="#c22a0a"/><path d="M5.6 6.3V8.2C5.6 10.6 11.6 10.6 11.6 8.2V6.3" fill="none" stroke="#fbf7f4" stroke-width="1.5"/><path d="M8.6 7.6V10.8" stroke="#9aa7b4" stroke-width="1.2"/><path d="M6.4 10.9H10.8" stroke="#5a4a48" stroke-width=".7"/></svg>
<svg class="a" style="left:649.7px;top:243.2px" width="10.7" height="16.05" viewBox="0 0 14 21" ><path d="M1 1V18.2L4.9 14.6L7.6 20L10.2 18.8L7.6 13.6H13Z" fill="#fff" stroke="#15151f" stroke-width="1.15" stroke-linejoin="miter"/></svg>
</menu>
<footer class="sec" aria-label="Taskbar">
<div class="a" style="left:0px;top:858.3px;width:1600px;height:41.7px;background:#101010;border-top:1px solid #000;box-sizing:border-box"></div>
<svg class="a" style="left:16px;top:870px" width="18" height="18" viewBox="0 0 18 18" ><path d="M0 1.5L7.1 0.8V8.2H0ZM8.1 0.7L18 0V8.2H8.1ZM0 9.2H7.1V17.2L0 16.5ZM8.1 9.2H18V18L8.1 17.3Z" fill="#fff"/></svg>
<div class="a" style="left:50px;top:858.3px;width:300px;height:41.7px;background:#f3f3f3;border-top:1px solid #fff;border-bottom:1px solid #cfcfcf;box-sizing:border-box"></div>
<svg class="a" style="left:61px;top:869px" width="20" height="20" viewBox="0 0 20 20" ><circle cx="12.4" cy="7.3" r="5.5" fill="none" stroke="#1a1a1a" stroke-width="1.2"/><path d="M8.5 11.3L1.8 18" stroke="#1a1a1a" stroke-width="1.3"/></svg>
<span class="t" style="top:871.90px;font-size:16.2px;color:#2b2b2b;left:92.00px;transform:scaleX(0.9505);transform-origin:left center;">Type here to search</span>
<svg class="a" style="left:266px;top:858px" width="84" height="42" viewBox="0 0 84 42" ><path d="M2 39L14 27H76.5L83.5 39Z" fill="#f0cf9f"/><path d="M2 39H83.5V42H2Z" fill="#d9b787"/><path d="M9.6 6.6l1.3 2.9 2.9 1.3-2.9 1.3-1.3 2.9-1.3-2.9-2.9-1.3 2.9-1.3z" fill="#e779f7"/><circle cx="46.2" cy="23" r="2" fill="#62d3e8"/><circle cx="77.2" cy="11.4" r="2" fill="#ffa51e"/><path d="M14 20.5L40.2 19.9L42.1 30.5L18.4 37.4Z" fill="#3fa546"/><path d="M15.9 18.6L25.9 15.2L29.6 31.1L19 34.9Z" fill="#f4f1fb"/><path d="M25.9 15.2L35.25 13.3L40.9 27.4L29.6 31.1Z" fill="#ebe6f7"/><path d="M19 34.9L29.6 31.1L40.9 27.4L41.2 28.6L29.8 32.6L19.4 36.2Z" fill="#cdbfe8"/><path d="M19 21.5l5-1.6M19.7 24l5-1.6M20.4 26.5l5-1.6M21.1 29l5-1.6M28.5 18l5-1.2M29.3 20.5l5-1.2M30.1 23l4-1" stroke="#a9a3b8" stroke-width=".7"/><path d="M33.7 22.7L41.4 10.2L45.4 12.6L37.6 25.2L34 26.4Z" fill="#f9b52a"/><path d="M41.4 10.2L42.6 8.2L46.6 10.6L45.4 12.6Z" fill="#dcdcee"/><path d="M42.6 8.2L44 6L48 8.4L46.6 10.6Z" fill="#f4493a"/><path d="M33.7 22.7L37.6 25.2L34 26.4Z" fill="#c98a7a"/><path d="M59.3 9.5C59.3 1.5 67.1 1.5 67.1 9.5" fill="none" stroke="#1747b8" stroke-width="1.8"/><path d="M52.8 20C52.8 9.5 58 7.4 63.2 7.4C68.4 7.4 73.7 9.5 73.7 20V34.7C73.7 36.6 72.6 37.7 70.7 37.7H55.8C53.9 37.7 52.8 36.6 52.8 34.7Z" fill="url(#bp)"/><path d="M54.6 17C55.5 11.5 59 10.2 63.2 10.2C67.4 10.2 71 11.5 71.9 17" fill="none" stroke="#9db7f5" stroke-width=".8"/><path d="M54.6 29C54.6 24 58.5 22 63 22C67.5 22 71.5 24 71.5 29V33C71.5 34.8 70.6 35.5 69 35.5H57C55.4 35.5 54.6 34.8 54.6 33Z" fill="url(#pk)"/><ellipse cx="55.9" cy="30" rx=".9" ry="1.6" fill="#fff"/></svg>
<svg class="a" style="left:365px;top:869px" width="20" height="19" viewBox="0 0 20 19" ><path d="M0.4 2.2H11.6M0.4 16.4H11.6" stroke="#fff" stroke-width="1.5"/><path d="M2.3 2.2V6M9.7 2.2V6M2.3 16.4V12.6M9.7 16.4V12.6" stroke="#fff" stroke-width="1.3"/><rect x="2.3" y="6.1" width="7.4" height="6.4" fill="none" stroke="#fff" stroke-width="1.5"/><path d="M16.8 0.4V18.4" stroke="#fff" stroke-width="1.3"/><rect x="15.6" y="6" width="2.4" height="2.8" fill="#fff"/></svg>
<svg class="a" style="left:415.5px;top:868.5px" width="26" height="21" viewBox="0 0 26 21" ><path d="M0.3 9.6L4.8 5.1L12.6 12.9L8.1 17.4Z" fill="#2363cf"/><path d="M8.3 20.4L3.8 15.9L20.8 0.5L25.3 5Z" fill="#3c99f0"/></svg>
<svg class="a" style="left:467px;top:865.9px" width="26.2" height="26.2" viewBox="0 0 26 26" ><circle cx="13" cy="13" r="13" fill="#1583d8"/><path d="M0.5 10.5C2 4.2 7.4 0 13 0C20.5 0 26 5.5 26 11.5C26 15.6 22.6 18 19 18C16.5 18 14.8 17 14.5 15.6C15.8 14 15.5 10.8 12.5 10.5C8.2 7.6 3 7.8 0.5 10.5Z" fill="url(#eg)"/><path d="M10.6 11.4C7.5 14 6.8 19.5 10 22.8C13.2 26.2 19.8 25.6 23.9 19.6C20.5 21 14.5 20.8 12 17.5C10.6 15.6 10.3 13 10.6 11.4Z" fill="#0f58a6"/><path d="M12.7 10.6C10.6 10.4 9.9 12.6 11 14.2C12 17.2 14.6 19.4 18.6 19.5C21.4 19.5 24 18.7 25.6 17.2L24.4 16C22 18.2 17 18.8 14.6 15.7C15.6 13.4 14.8 10.9 12.7 10.6Z" fill="#101010"/></svg>
<svg class="a" style="left:519px;top:866.9px" width="25" height="23.5" viewBox="0 0 25 23.5" ><rect x="7" y="0" width="16.8" height="3.8" fill="#0f6cc8"/><rect x="7" y="3.8" width="5.6" height="6" fill="#1a86de"/><rect x="12.6" y="3.8" width="5.6" height="6" fill="#2ba6ee"/><rect x="18.2" y="3.8" width="5.6" height="6" fill="#52d8ff"/><rect x="7" y="9.8" width="5.6" height="6" fill="#0f5fb8"/><rect x="12.6" y="9.8" width="5.6" height="6" fill="#1577d3"/><rect x="18.2" y="9.8" width="5.6" height="6" fill="#2ba6ee"/><path d="M6 13L15.5 18L25 12.3V23.5H6Z" fill="#1e9be8"/><path d="M15.5 18L25 12.3V23.5Z" fill="#35b5f2"/><path d="M6 13L25 23.5H6Z" fill="#1a8ee0"/><rect x="0" y="5" width="12.3" height="13.2" rx="1" fill="#1268cf"/><ellipse cx="6.2" cy="11.8" rx="2.8" ry="3.1" fill="none" stroke="#fff" stroke-width="1.8"/></svg>
<svg class="a" style="left:570.3px;top:866.4px" width="26" height="25" viewBox="0 0 26 25" ><path d="M0 8.2L13 0.2L26 8.2Z" fill="#1068c8"/><path d="M0 8.2H26V24.6H0Z" fill="#29a8ea"/><path d="M0 8.2H26V9.2H0Z" fill="#0b2f92"/><path d="M2.6 9L23.4 9L13 16.6Z" fill="#fff"/><path d="M13 16.6L26 9V24.6Z" fill="#3ec4f5"/><path d="M0 9L13 16.6L26 24.6H0Z" fill="#23a0e6"/></svg>
<div class="a" style="left:610px;top:859px;width:51px;height:1px;background:#4a4a4a"></div>
</footer>
</body></html>
